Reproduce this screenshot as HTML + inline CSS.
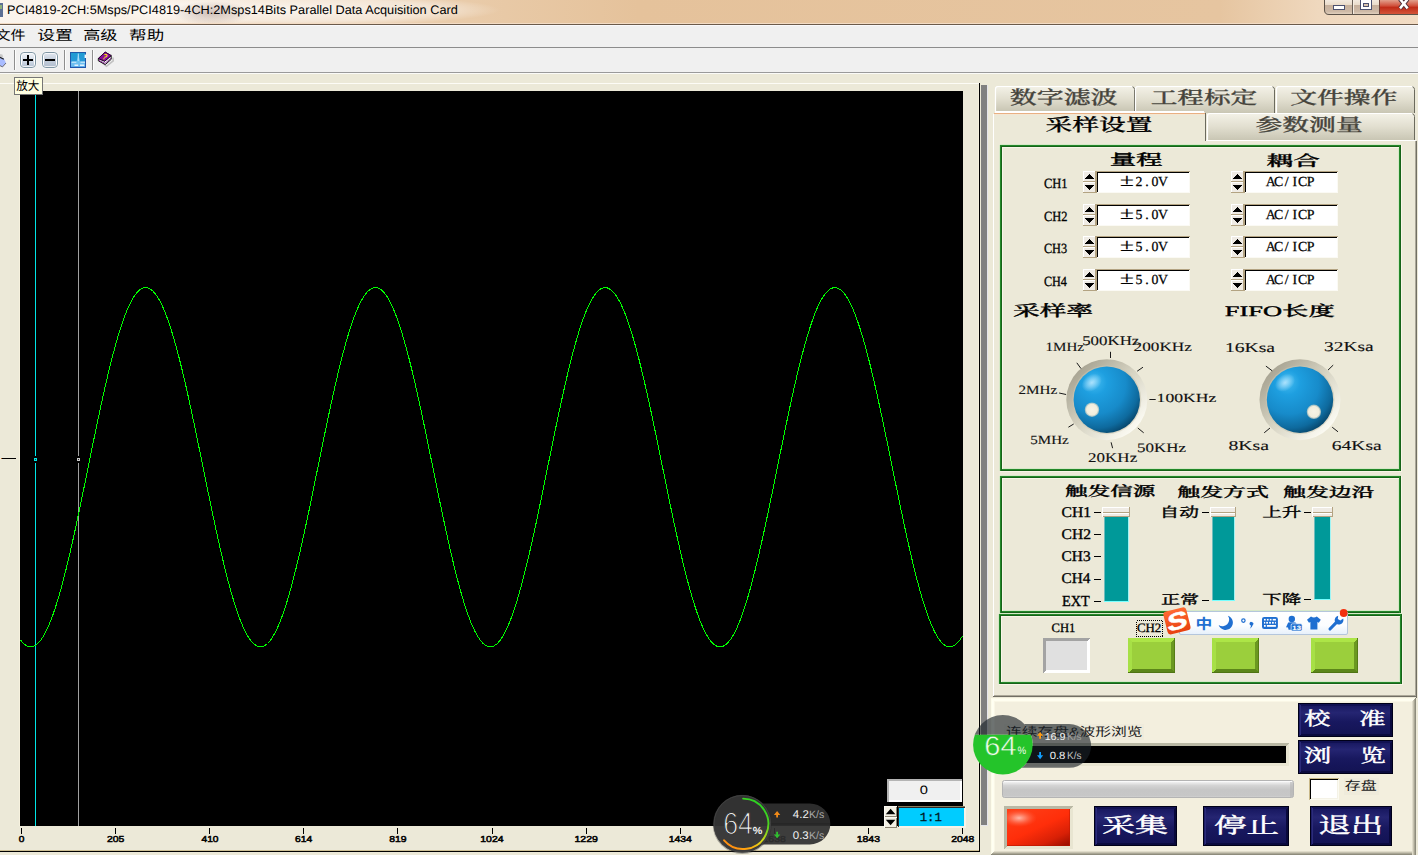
<!DOCTYPE html>
<html lang="zh-CN"><head><meta charset="utf-8"><title>PCI4819 Parallel Data Acquisition Card</title>
<style>
html,body{margin:0;padding:0;background:#ece9d8;overflow:hidden}
body{width:1418px;height:855px;position:relative;font-family:"Liberation Sans","Noto Sans CJK SC",sans-serif}
svg{position:absolute;left:0;top:0;display:block}
svg text{white-space:pre}
.crisp{shape-rendering:crispEdges}
</style></head><body>
<svg width="1418" height="855" viewBox="0 0 1418 855" shape-rendering="crispEdges" text-rendering="geometricPrecision">
<defs>

<linearGradient id="gLeftGlow" x1="0" y1="0" x2="1" y2="0"><stop offset="0" stop-color="#fbf5ee" stop-opacity="0.95"/><stop offset="0.6" stop-color="#fbf5ee" stop-opacity="0.8"/><stop offset="1" stop-color="#fbf5ee" stop-opacity="0"/></linearGradient>
<radialGradient id="gSmudge" cx="0.5" cy="0.5" r="0.5"><stop offset="0" stop-color="#8a6f6a" stop-opacity="0.38"/><stop offset="1" stop-color="#8a6f6a" stop-opacity="0"/></radialGradient>
<linearGradient id="gTitle" x1="0" y1="0" x2="1" y2="0">
 <stop offset="0" stop-color="#f3e3d2"/><stop offset="0.33" stop-color="#e9cba9"/><stop offset="0.45" stop-color="#e5c29b"/><stop offset="0.86" stop-color="#e6c5a0"/><stop offset="0.93" stop-color="#efd8be"/><stop offset="1" stop-color="#f2dcc4"/>
</linearGradient>
<radialGradient id="gGlow" cx="0.5" cy="0.5" r="0.5"><stop offset="0" stop-color="#fff" stop-opacity="0.75"/><stop offset="0.7" stop-color="#fff" stop-opacity="0.45"/><stop offset="1" stop-color="#fff" stop-opacity="0"/></radialGradient>
<linearGradient id="gBtnPlus" x1="0" y1="0" x2="0" y2="1"><stop offset="0" stop-color="#eef2f7"/><stop offset="0.5" stop-color="#d5dde8"/><stop offset="1" stop-color="#b9c6d6"/></linearGradient>
<linearGradient id="gBtnMinus" x1="0" y1="0" x2="0" y2="1"><stop offset="0" stop-color="#dfe5ee"/><stop offset="0.5" stop-color="#c3cddb"/><stop offset="1" stop-color="#b4c0d0"/></linearGradient>
<linearGradient id="gChart" x1="0" y1="0" x2="0" y2="1"><stop offset="0" stop-color="#1f9cd2"/><stop offset="0.6" stop-color="#2698d8"/><stop offset="1" stop-color="#2a84dc"/></linearGradient>
<linearGradient id="gTab" x1="0" y1="0" x2="0" y2="1"><stop offset="0" stop-color="#f4f2e8"/><stop offset="0.5" stop-color="#e2dfd0"/><stop offset="1" stop-color="#c9c6b4"/></linearGradient>
<linearGradient id="gRing" x1="0.15" y1="0.15" x2="0.85" y2="0.85"><stop offset="0" stop-color="#aaa695"/><stop offset="0.5" stop-color="#d8d5c4"/><stop offset="1" stop-color="#fbfaf2"/></linearGradient>
<radialGradient id="gBall" cx="0.36" cy="0.3" r="0.75" fx="0.3" fy="0.22"><stop offset="0" stop-color="#45bdf2"/><stop offset="0.25" stop-color="#1e9fe0"/><stop offset="0.6" stop-color="#178bca"/><stop offset="0.85" stop-color="#0e6a9e"/><stop offset="1" stop-color="#07456a"/></radialGradient>
<radialGradient id="gHi" cx="0.5" cy="0.5" r="0.5"><stop offset="0" stop-color="#bfe9ff" stop-opacity="0.85"/><stop offset="1" stop-color="#bfe9ff" stop-opacity="0"/></radialGradient>
<radialGradient id="gDot" cx="0.5" cy="0.5" r="0.5"><stop offset="0" stop-color="#f7f4e6"/><stop offset="0.75" stop-color="#f1eddc"/><stop offset="1" stop-color="#d9d5c0" stop-opacity="0.6"/></radialGradient>
<linearGradient id="gThumb" x1="0" y1="0" x2="0" y2="1"><stop offset="0" stop-color="#fbfaf6"/><stop offset="0.45" stop-color="#e6e3d8"/><stop offset="0.5" stop-color="#b8b29c"/><stop offset="0.58" stop-color="#f4f2ea"/><stop offset="1" stop-color="#d4d0bf"/></linearGradient>
<linearGradient id="gProg" x1="0" y1="0" x2="0" y2="1"><stop offset="0" stop-color="#fdfdfd"/><stop offset="0.12" stop-color="#ececec"/><stop offset="0.3" stop-color="#d3d3d3"/><stop offset="0.55" stop-color="#c6c6c6"/><stop offset="0.9" stop-color="#c7c7c7"/><stop offset="1" stop-color="#d4d4d4"/></linearGradient>
<linearGradient id="gRed" x1="0.1" y1="0" x2="0.9" y2="1"><stop offset="0" stop-color="#ff4018"/><stop offset="0.5" stop-color="#ff2e0a"/><stop offset="0.8" stop-color="#d82006"/><stop offset="1" stop-color="#a01000"/></linearGradient>
<radialGradient id="gRedHi" cx="0.5" cy="0.5" r="0.5"><stop offset="0" stop-color="#ffc0b2" stop-opacity="0.95"/><stop offset="0.35" stop-color="#ff9a84" stop-opacity="0.7"/><stop offset="1" stop-color="#ff5a3a" stop-opacity="0"/></radialGradient>
<linearGradient id="gNavy" x1="0" y1="0" x2="0" y2="1"><stop offset="0" stop-color="#14145a"/><stop offset="0.28" stop-color="#252572"/><stop offset="0.55" stop-color="#18185f"/><stop offset="1" stop-color="#121252"/></linearGradient>
<linearGradient id="gIme" x1="0" y1="0" x2="0" y2="1"><stop offset="0" stop-color="#ffffff"/><stop offset="0.6" stop-color="#fbfdff"/><stop offset="1" stop-color="#e6f0fb"/></linearGradient>
<linearGradient id="gSogou" x1="0" y1="0" x2="0" y2="1"><stop offset="0" stop-color="#ff6a33"/><stop offset="1" stop-color="#e8400f"/></linearGradient>
<linearGradient id="gArc" x1="0.8" y1="0" x2="0.2" y2="1"><stop offset="0" stop-color="#22d422"/><stop offset="0.3" stop-color="#4fd321"/><stop offset="0.6" stop-color="#d8d818"/><stop offset="0.8" stop-color="#ffb010"/><stop offset="1" stop-color="#ff8c10"/></linearGradient>
<linearGradient id="gClose" x1="0" y1="0" x2="0" y2="1"><stop offset="0" stop-color="#e2a08c"/><stop offset="0.45" stop-color="#cf4a35"/><stop offset="0.5" stop-color="#bf2a16"/><stop offset="1" stop-color="#d4553a"/></linearGradient>
<linearGradient id="gCap" x1="0" y1="0" x2="0" y2="1"><stop offset="0" stop-color="#f4ece3"/><stop offset="0.36" stop-color="#eadccb"/><stop offset="0.4" stop-color="#c6b09c"/><stop offset="0.8" stop-color="#cdb9a6"/><stop offset="1" stop-color="#e4d4c2"/></linearGradient>

</defs>
<rect x="0" y="0" width="1418" height="855" fill="#ece9d8" />
<g id="titlebar">
<rect x="0" y="0" width="1418" height="23" fill="url(#gTitle)" />
<rect x="0" y="0" width="260" height="23" fill="url(#gLeftGlow)"/>
<ellipse cx="300" cy="10" rx="200" ry="16" fill="url(#gGlow)"/>
<ellipse cx="212" cy="13" rx="40" ry="12" fill="url(#gSmudge)"/>
<rect x="0" y="23" width="1418" height="1" fill="#f3dcc5" />
<rect x="0" y="24" width="1418" height="1" fill="#6b5a4a" />
<rect x="0" y="3" width="3" height="14" fill="#5b6f94" />
<rect x="0" y="5" width="2" height="4" fill="#8fb07a" />
<text transform="translate(6.98,13.90) scale(1.026,1)" font-family='"Liberation Sans","Noto Sans CJK SC",sans-serif' font-weight="normal" font-size="12.40" fill="#000" >PCI4819-2CH:5Msps/PCI4819-4CH:2Msps14Bits Parallel Data Acquisition Card</text>
<path d="M1324.5,-1 V10 Q1324.5,14.5 1329,14.5 H1419 V-1 Z" fill="url(#gCap)" stroke="#5c5248" stroke-width="1" shape-rendering="geometricPrecision"/>
<path d="M1379.5,0 H1419 V14 H1379.5 Z" fill="url(#gClose)"/>
<rect x="1352" y="0" width="1" height="14" fill="#6b6158" />
<rect x="1379" y="0" width="1" height="14" fill="#6b4038" />
<rect x="1353" y="0" width="1" height="14" fill="#f6ece0" />
<rect x="1333.5" y="5.5" width="11" height="4" fill="#fff" stroke="#4a5070" stroke-width="1"/>
<rect x="1360.5" y="-0.5" width="11" height="10" fill="#fff" stroke="#4a5070" stroke-width="1"/>
<rect x="1363.5" y="3.5" width="5" height="3" fill="#d9c4ae" stroke="#4a5070" stroke-width="1"/>
<path d="M1400,-1 L1407.6,8.4 M1407.6,-1 L1400,8.4" fill="none" stroke="#50303a" stroke-width="4.4" shape-rendering="geometricPrecision"/>
<path d="M1400,-1 L1407.6,8.4 M1407.6,-1 L1400,8.4" fill="none" stroke="#fff" stroke-width="2.5" shape-rendering="geometricPrecision"/>
</g>
<g id="menubar">
<rect x="0" y="25" width="1418" height="22" fill="#f0f0f0" />
<rect x="0" y="25" width="1418" height="1" fill="#f9f9fb" />
<rect x="0" y="47" width="1418" height="1" fill="#8c8c8c" />
<text transform="translate(-4.45,40.00) scale(1.124,1)" font-family='"Liberation Sans","Noto Sans CJK SC",sans-serif' font-weight="normal" font-size="13.37" fill="#000" >文件</text>
<text transform="translate(37.29,39.96) scale(1.290,1)" font-family='"Liberation Sans","Noto Sans CJK SC",sans-serif' font-weight="normal" font-size="13.80" fill="#000" >设置</text>
<text transform="translate(83.14,39.98) scale(1.272,1)" font-family='"Liberation Sans","Noto Sans CJK SC",sans-serif' font-weight="normal" font-size="13.51" fill="#000" >高级</text>
<text transform="translate(129.12,39.98) scale(1.299,1)" font-family='"Liberation Sans","Noto Sans CJK SC",sans-serif' font-weight="normal" font-size="13.51" fill="#000" >帮助</text>
</g>
<g id="toolbar">
<rect x="0" y="48" width="1418" height="24" fill="#f0f0f0" />
<rect x="0" y="72" width="1418" height="1" fill="#9a9a9a" />
<rect x="0" y="73" width="1418" height="1" fill="#fbfbf8" />
<rect x="14" y="50" width="1" height="20" fill="#8e8e8e" />
<rect x="15" y="50" width="1" height="20" fill="#fdfdfd" />
<rect x="64" y="50" width="1" height="20" fill="#8e8e8e" />
<rect x="65" y="50" width="1" height="20" fill="#fdfdfd" />
<rect x="92" y="50" width="1" height="20" fill="#8e8e8e" />
<rect x="93" y="50" width="1" height="20" fill="#fdfdfd" />
<g shape-rendering="geometricPrecision"><path d="M0,54 L2.4,54.4 L3.3,57.2 L0,57.6 Z" fill="#c9c9c9"/><path d="M0,57.4 L3.6,58 L6,63 L2.5,66.9 L0,65.6 Z" fill="#a9bcff"/><path d="M0,57.3 L3.8,59.3" stroke="#222" stroke-width="1.1" fill="none"/><path d="M6,63 L2.5,66.9 L0,65.6" stroke="#6a6a78" stroke-width="1" fill="none"/></g>
<g shape-rendering="geometricPrecision">
<rect x="19.5" y="51.5" width="17" height="17" rx="4.2" fill="#fbfcfd" opacity="0.8"/>
<rect x="20.5" y="52.5" width="15" height="15" rx="3.4" fill="#ffffff" stroke="#7f95a3" stroke-width="1"/>
<rect x="22" y="53.7" width="12" height="12.6" rx="1.6" fill="url(#gBtnPlus)"/>
<rect x="41.5" y="51.5" width="17" height="17" rx="4.2" fill="#fbfcfd" opacity="0.8"/>
<rect x="42.5" y="52.5" width="15" height="15" rx="3.4" fill="#ffffff" stroke="#7f95a3" stroke-width="1"/>
<rect x="44" y="53.7" width="12" height="12.6" rx="1.6" fill="url(#gBtnMinus)"/>
</g>
<rect x="23" y="59" width="10" height="2" fill="#000" />
<rect x="27" y="55" width="2" height="10" fill="#000" />
<rect x="45" y="59" width="10" height="2" fill="#000" />
<rect x="70" y="52" width="16" height="16" fill="url(#gChart)" />
<g shape-rendering="geometricPrecision">
<rect x="70.5" y="52.5" width="15" height="15" fill="none" stroke="#1f4aa0" stroke-width="1" opacity="0.8"/>
<path d="M71,62.2 H75.6 Q77,61.2 77.6,57.5 L78.3,53.2 L79.1,57.5 Q79.7,61.2 81.2,62.2 H85 V66.8 H71 Z" fill="#9adcff" opacity="0.6"/>
<path d="M71.5,62.2 H76.3 M80.5,62.2 H85" stroke="#e6f5ff" stroke-width="1.3" opacity="0.9"/>
<path d="M74.5,65.2 H78.2 M80,65.2 H84.2" stroke="#f2faff" stroke-width="1.5" opacity="0.9"/>
<path d="M78.3,53.6 V61" stroke="#bfe6ff" stroke-width="1.1" opacity="0.85"/>
<rect x="84.6" y="54.6" width="1.6" height="3.4" fill="#f4f8ff"/>
</g>
<g shape-rendering="geometricPrecision">
<path d="M100,61 L106.5,66.3 L113.2,61 L113,57.5" fill="none" stroke="#9a9a9a" stroke-width="1.6" opacity="0.55"/>
<path d="M98.3,58.5 L105.2,52.1 L111.2,55.6 L104.7,61.2 Z" fill="#8a0c9c" stroke="#1a0020" stroke-width="0.8"/>
<path d="M98.3,58.5 L104.7,61.2 L111.2,55.6 L111.2,59.3 L105.3,64.6 L98.3,60.8 Z" fill="#f4f4f4" stroke="#000" stroke-width="0.9" stroke-linejoin="round"/>
<path d="M98.3,58.5 L105.2,52.1 L111.2,55.6 L104.7,61.2 Z" fill="#8a0c9c" stroke="#1a0020" stroke-width="0.7"/>
<path d="M99,60.4 L105,63.4 L111,58.3" fill="none" stroke="#7a0a8a" stroke-width="0.8"/>
<g transform="rotate(28 105 56.6)"><text transform="translate(102.92,59.60) scale(0.819,1)" font-family='"Liberation Sans","Noto Sans CJK SC",sans-serif' font-weight="bold" font-size="8.45" fill="#ffee00" >?</text></g>
</g>
</g>
<g id="plotpanel">
<rect x="0" y="83" width="979" height="1" fill="#fdfcf6" />
<rect x="0" y="850" width="979" height="1" fill="#cdbf94" />
<rect x="0" y="851" width="980" height="1" fill="#000" />
<rect x="979" y="83" width="1" height="769" fill="#000" />
<rect x="987" y="85" width="1" height="740" fill="#e4e4ea" />
<rect x="981" y="825" width="7" height="1" fill="#e4e4ea" />
<rect x="978" y="85" width="1" height="765" fill="#f4efdc" />
<rect x="981" y="85" width="6" height="740" fill="#808080" />
<rect x="19" y="91" width="1" height="735" fill="#f6f1de" />
<rect x="20" y="91" width="943" height="735" fill="#000" />
<rect x="35" y="91" width="1" height="735" fill="#00e5e5" />
<rect x="78" y="91" width="1" height="735" fill="#a0a0a0" />
<rect x="33" y="456" width="5" height="7" fill="#000" />
<rect x="76" y="456" width="5" height="7" fill="#000" />
<rect x="34" y="458" width="3" height="3" fill="#00e5e5" />
<rect x="35" y="459" width="1" height="1" fill="#004c4c" />
<rect x="77" y="458" width="3" height="3" fill="#c8c8c8" />
<rect x="78" y="459" width="1" height="1" fill="#222" />
<polyline fill="none" stroke="#00ff00" stroke-width="1" points="20.5,639.8 21.5,641.1 22.5,642.3 23.5,643.3 24.5,644.2 25.5,645.0 26.5,645.6 27.5,646.1 28.5,646.5 29.5,646.7 30.5,646.8 31.5,646.8 32.5,646.6 33.5,646.3 34.5,645.8 35.5,645.3 36.5,644.6 37.5,643.7 38.5,642.8 39.5,641.7 40.5,640.4 41.5,639.1 42.5,637.6 43.5,636.0 44.5,634.2 45.5,632.3 46.5,630.3 47.5,628.2 48.5,626.0 49.5,623.6 50.5,621.2 51.5,618.6 52.5,615.9 53.5,613.1 54.5,610.2 55.5,607.1 56.5,604.0 57.5,600.8 58.5,597.4 59.5,594.0 60.5,590.5 61.5,586.9 62.5,583.2 63.5,579.4 64.5,575.5 65.5,571.5 66.5,567.5 67.5,563.4 68.5,559.2 69.5,554.9 70.5,550.6 71.5,546.2 72.5,541.8 73.5,537.3 74.5,532.8 75.5,528.2 76.5,523.5 77.5,518.8 78.5,514.1 79.5,509.4 80.5,504.6 81.5,499.7 82.5,494.9 83.5,490.0 84.5,485.2 85.5,480.3 86.5,475.4 87.5,470.5 88.5,465.5 89.5,460.6 90.5,455.7 91.5,450.8 92.5,445.9 93.5,441.1 94.5,436.2 95.5,431.4 96.5,426.6 97.5,421.8 98.5,417.1 99.5,412.4 100.5,407.7 101.5,403.1 102.5,398.6 103.5,394.1 104.5,389.6 105.5,385.2 106.5,380.9 107.5,376.6 108.5,372.4 109.5,368.2 110.5,364.2 111.5,360.2 112.5,356.3 113.5,352.5 114.5,348.7 115.5,345.1 116.5,341.5 117.5,338.1 118.5,334.7 119.5,331.4 120.5,328.3 121.5,325.2 122.5,322.3 123.5,319.4 124.5,316.7 125.5,314.1 126.5,311.5 127.5,309.2 128.5,306.9 129.5,304.7 130.5,302.7 131.5,300.8 132.5,299.0 133.5,297.3 134.5,295.8 135.5,294.4 136.5,293.1 137.5,292.0 138.5,291.0 139.5,290.1 140.5,289.3 141.5,288.7 142.5,288.2 143.5,287.9 144.5,287.7 145.5,287.6 146.5,287.7 147.5,287.8 148.5,288.2 149.5,288.6 150.5,289.2 151.5,289.9 152.5,290.8 153.5,291.8 154.5,292.9 155.5,294.1 156.5,295.5 157.5,297.0 158.5,298.7 159.5,300.4 160.5,302.3 161.5,304.3 162.5,306.4 163.5,308.7 164.5,311.1 165.5,313.5 166.5,316.1 167.5,318.9 168.5,321.7 169.5,324.6 170.5,327.7 171.5,330.8 172.5,334.0 173.5,337.4 174.5,340.8 175.5,344.4 176.5,348.0 177.5,351.7 178.5,355.5 179.5,359.4 180.5,363.4 181.5,367.4 182.5,371.5 183.5,375.7 184.5,380.0 185.5,384.3 186.5,388.7 187.5,393.2 188.5,397.7 189.5,402.2 190.5,406.8 191.5,411.5 192.5,416.2 193.5,420.9 194.5,425.6 195.5,430.4 196.5,435.3 197.5,440.1 198.5,445.0 199.5,449.9 200.5,454.7 201.5,459.7 202.5,464.6 203.5,469.5 204.5,474.4 205.5,479.3 206.5,484.2 207.5,489.1 208.5,493.9 209.5,498.8 210.5,503.6 211.5,508.4 212.5,513.2 213.5,517.9 214.5,522.6 215.5,527.2 216.5,531.8 217.5,536.4 218.5,540.9 219.5,545.4 220.5,549.7 221.5,554.1 222.5,558.3 223.5,562.5 224.5,566.7 225.5,570.7 226.5,574.7 227.5,578.6 228.5,582.4 229.5,586.1 230.5,589.8 231.5,593.3 232.5,596.8 233.5,600.1 234.5,603.4 235.5,606.5 236.5,609.6 237.5,612.5 238.5,615.3 239.5,618.1 240.5,620.7 241.5,623.2 242.5,625.5 243.5,627.8 244.5,629.9 245.5,631.9 246.5,633.8 247.5,635.6 248.5,637.3 249.5,638.8 250.5,640.2 251.5,641.4 252.5,642.5 253.5,643.5 254.5,644.4 255.5,645.1 256.5,645.7 257.5,646.2 258.5,646.5 259.5,646.7 260.5,646.8 261.5,646.7 262.5,646.5 263.5,646.2 264.5,645.7 265.5,645.1 266.5,644.4 267.5,643.5 268.5,642.5 269.5,641.4 270.5,640.1 271.5,638.7 272.5,637.2 273.5,635.5 274.5,633.8 275.5,631.9 276.5,629.8 277.5,627.7 278.5,625.4 279.5,623.0 280.5,620.5 281.5,617.9 282.5,615.2 283.5,612.4 284.5,609.4 285.5,606.4 286.5,603.2 287.5,599.9 288.5,596.6 289.5,593.1 290.5,589.6 291.5,585.9 292.5,582.2 293.5,578.4 294.5,574.5 295.5,570.5 296.5,566.5 297.5,562.3 298.5,558.1 299.5,553.9 300.5,549.5 301.5,545.1 302.5,540.7 303.5,536.2 304.5,531.6 305.5,527.0 306.5,522.3 307.5,517.7 308.5,512.9 309.5,508.2 310.5,503.4 311.5,498.5 312.5,493.7 313.5,488.8 314.5,483.9 315.5,479.0 316.5,474.1 317.5,469.2 318.5,464.3 319.5,459.4 320.5,454.5 321.5,449.6 322.5,444.7 323.5,439.9 324.5,435.0 325.5,430.2 326.5,425.4 327.5,420.6 328.5,415.9 329.5,411.2 330.5,406.6 331.5,402.0 332.5,397.4 333.5,392.9 334.5,388.5 335.5,384.1 336.5,379.8 337.5,375.5 338.5,371.3 339.5,367.2 340.5,363.2 341.5,359.2 342.5,355.3 343.5,351.5 344.5,347.8 345.5,344.2 346.5,340.7 347.5,337.2 348.5,333.9 349.5,330.6 350.5,327.5 351.5,324.5 352.5,321.5 353.5,318.7 354.5,316.0 355.5,313.4 356.5,310.9 357.5,308.6 358.5,306.3 359.5,304.2 360.5,302.2 361.5,300.3 362.5,298.6 363.5,296.9 364.5,295.4 365.5,294.1 366.5,292.8 367.5,291.7 368.5,290.7 369.5,289.9 370.5,289.2 371.5,288.6 372.5,288.1 373.5,287.8 374.5,287.6 375.5,287.6 376.5,287.7 377.5,287.9 378.5,288.3 379.5,288.8 380.5,289.4 381.5,290.1 382.5,291.0 383.5,292.0 384.5,293.2 385.5,294.5 386.5,295.9 387.5,297.4 388.5,299.1 389.5,300.9 390.5,302.8 391.5,304.8 392.5,307.0 393.5,309.3 394.5,311.7 395.5,314.2 396.5,316.8 397.5,319.6 398.5,322.4 399.5,325.4 400.5,328.4 401.5,331.6 402.5,334.9 403.5,338.2 404.5,341.7 405.5,345.3 406.5,348.9 407.5,352.7 408.5,356.5 409.5,360.4 410.5,364.4 411.5,368.4 412.5,372.6 413.5,376.8 414.5,381.1 415.5,385.4 416.5,389.8 417.5,394.3 418.5,398.8 419.5,403.4 420.5,408.0 421.5,412.6 422.5,417.3 423.5,422.1 424.5,426.8 425.5,431.6 426.5,436.5 427.5,441.3 428.5,446.2 429.5,451.1 430.5,456.0 431.5,460.9 432.5,465.8 433.5,470.7 434.5,475.6 435.5,480.5 436.5,485.4 437.5,490.3 438.5,495.1 439.5,500.0 440.5,504.8 441.5,509.6 442.5,514.3 443.5,519.1 444.5,523.7 445.5,528.4 446.5,533.0 447.5,537.5 448.5,542.0 449.5,546.5 450.5,550.8 451.5,555.2 452.5,559.4 453.5,563.6 454.5,567.7 455.5,571.7 456.5,575.7 457.5,579.5 458.5,583.3 459.5,587.0 460.5,590.7 461.5,594.2 462.5,597.6 463.5,600.9 464.5,604.2 465.5,607.3 466.5,610.3 467.5,613.2 468.5,616.0 469.5,618.7 470.5,621.3 471.5,623.8 472.5,626.1 473.5,628.3 474.5,630.4 475.5,632.4 476.5,634.3 477.5,636.0 478.5,637.6 479.5,639.1 480.5,640.5 481.5,641.7 482.5,642.8 483.5,643.8 484.5,644.6 485.5,645.3 486.5,645.9 487.5,646.3 488.5,646.6 489.5,646.8 490.5,646.8 491.5,646.7 492.5,646.5 493.5,646.1 494.5,645.6 495.5,644.9 496.5,644.2 497.5,643.3 498.5,642.2 499.5,641.1 500.5,639.8 501.5,638.3 502.5,636.8 503.5,635.1 504.5,633.3 505.5,631.4 506.5,629.3 507.5,627.1 508.5,624.8 509.5,622.4 510.5,619.9 511.5,617.2 512.5,614.5 513.5,611.6 514.5,608.7 515.5,605.6 516.5,602.4 517.5,599.1 518.5,595.7 519.5,592.2 520.5,588.7 521.5,585.0 522.5,581.3 523.5,577.4 524.5,573.5 525.5,569.5 526.5,565.4 527.5,561.3 528.5,557.1 529.5,552.8 530.5,548.4 531.5,544.0 532.5,539.6 533.5,535.0 534.5,530.5 535.5,525.8 536.5,521.2 537.5,516.5 538.5,511.7 539.5,507.0 540.5,502.2 541.5,497.3 542.5,492.5 543.5,487.6 544.5,482.7 545.5,477.8 546.5,472.9 547.5,468.0 548.5,463.1 549.5,458.2 550.5,453.3 551.5,448.4 552.5,443.5 553.5,438.6 554.5,433.8 555.5,429.0 556.5,424.2 557.5,419.5 558.5,414.7 559.5,410.1 560.5,405.4 561.5,400.8 562.5,396.3 563.5,391.8 564.5,387.4 565.5,383.0 566.5,378.7 567.5,374.5 568.5,370.3 569.5,366.2 570.5,362.2 571.5,358.2 572.5,354.4 573.5,350.6 574.5,346.9 575.5,343.3 576.5,339.8 577.5,336.4 578.5,333.1 579.5,329.8 580.5,326.7 581.5,323.7 582.5,320.8 583.5,318.0 584.5,315.4 585.5,312.8 586.5,310.3 587.5,308.0 588.5,305.8 589.5,303.7 590.5,301.7 591.5,299.9 592.5,298.2 593.5,296.6 594.5,295.1 595.5,293.8 596.5,292.5 597.5,291.5 598.5,290.5 599.5,289.7 600.5,289.0 601.5,288.5 602.5,288.1 603.5,287.8 604.5,287.6 605.5,287.6 606.5,287.7 607.5,288.0 608.5,288.4 609.5,288.9 610.5,289.6 611.5,290.3 612.5,291.3 613.5,292.3 614.5,293.5 615.5,294.8 616.5,296.3 617.5,297.8 618.5,299.5 619.5,301.3 620.5,303.3 621.5,305.4 622.5,307.6 623.5,309.9 624.5,312.3 625.5,314.8 626.5,317.5 627.5,320.3 628.5,323.1 629.5,326.1 630.5,329.2 631.5,332.4 632.5,335.7 633.5,339.1 634.5,342.6 635.5,346.2 636.5,349.8 637.5,353.6 638.5,357.5 639.5,361.4 640.5,365.4 641.5,369.5 642.5,373.6 643.5,377.9 644.5,382.2 645.5,386.5 646.5,390.9 647.5,395.4 648.5,399.9 649.5,404.5 650.5,409.1 651.5,413.8 652.5,418.5 653.5,423.3 654.5,428.0 655.5,432.8 656.5,437.7 657.5,442.5 658.5,447.4 659.5,452.3 660.5,457.2 661.5,462.1 662.5,467.0 663.5,471.9 664.5,476.8 665.5,481.7 666.5,486.6 667.5,491.5 668.5,496.4 669.5,501.2 670.5,506.0 671.5,510.8 672.5,515.5 673.5,520.2 674.5,524.9 675.5,529.5 676.5,534.1 677.5,538.7 678.5,543.1 679.5,547.6 680.5,551.9 681.5,556.2 682.5,560.5 683.5,564.6 684.5,568.7 685.5,572.7 686.5,576.7 687.5,580.5 688.5,584.3 689.5,588.0 690.5,591.5 691.5,595.0 692.5,598.4 693.5,601.7 694.5,604.9 695.5,608.0 696.5,611.0 697.5,613.9 698.5,616.7 699.5,619.4 700.5,621.9 701.5,624.4 702.5,626.7 703.5,628.9 704.5,631.0 705.5,632.9 706.5,634.7 707.5,636.4 708.5,638.0 709.5,639.5 710.5,640.8 711.5,642.0 712.5,643.1 713.5,644.0 714.5,644.8 715.5,645.5 716.5,646.0 717.5,646.4 718.5,646.7 719.5,646.8 720.5,646.8 721.5,646.6 722.5,646.4 723.5,646.0 724.5,645.4 725.5,644.8 726.5,643.9 727.5,643.0 728.5,641.9 729.5,640.7 730.5,639.4 731.5,638.0 732.5,636.4 733.5,634.7 734.5,632.8 735.5,630.9 736.5,628.8 737.5,626.6 738.5,624.2 739.5,621.8 740.5,619.2 741.5,616.6 742.5,613.8 743.5,610.9 744.5,607.9 745.5,604.8 746.5,601.6 747.5,598.3 748.5,594.9 749.5,591.4 750.5,587.8 751.5,584.1 752.5,580.3 753.5,576.5 754.5,572.5 755.5,568.5 756.5,564.4 757.5,560.2 758.5,556.0 759.5,551.7 760.5,547.3 761.5,542.9 762.5,538.4 763.5,533.9 764.5,529.3 765.5,524.7 766.5,520.0 767.5,515.3 768.5,510.5 769.5,505.8 770.5,501.0 771.5,496.1 772.5,491.3 773.5,486.4 774.5,481.5 775.5,476.6 776.5,471.7 777.5,466.8 778.5,461.9 779.5,457.0 780.5,452.1 781.5,447.2 782.5,442.3 783.5,437.4 784.5,432.6 785.5,427.8 786.5,423.0 787.5,418.3 788.5,413.6 789.5,408.9 790.5,404.3 791.5,399.7 792.5,395.2 793.5,390.7 794.5,386.3 795.5,381.9 796.5,377.6 797.5,373.4 798.5,369.3 799.5,365.2 800.5,361.2 801.5,357.3 802.5,353.4 803.5,349.7 804.5,346.0 805.5,342.4 806.5,338.9 807.5,335.5 808.5,332.2 809.5,329.1 810.5,326.0 811.5,323.0 812.5,320.1 813.5,317.4 814.5,314.7 815.5,312.2 816.5,309.7 817.5,307.4 818.5,305.3 819.5,303.2 820.5,301.3 821.5,299.4 822.5,297.7 823.5,296.2 824.5,294.7 825.5,293.4 826.5,292.3 827.5,291.2 828.5,290.3 829.5,289.5 830.5,288.9 831.5,288.4 832.5,288.0 833.5,287.7 834.5,287.6 835.5,287.6 836.5,287.8 837.5,288.1 838.5,288.5 839.5,289.1 840.5,289.7 841.5,290.6 842.5,291.5 843.5,292.6 844.5,293.8 845.5,295.2 846.5,296.6 847.5,298.2 848.5,300.0 849.5,301.8 850.5,303.8 851.5,305.9 852.5,308.1 853.5,310.5 854.5,312.9 855.5,315.5 856.5,318.2 857.5,321.0 858.5,323.9 859.5,326.9 860.5,330.0 861.5,333.2 862.5,336.5 863.5,340.0 864.5,343.5 865.5,347.1 866.5,350.8 867.5,354.6 868.5,358.4 869.5,362.4 870.5,366.4 871.5,370.5 872.5,374.7 873.5,378.9 874.5,383.2 875.5,387.6 876.5,392.0 877.5,396.5 878.5,401.1 879.5,405.7 880.5,410.3 881.5,415.0 882.5,419.7 883.5,424.5 884.5,429.2 885.5,434.1 886.5,438.9 887.5,443.8 888.5,448.6 889.5,453.5 890.5,458.4 891.5,463.3 892.5,468.2 893.5,473.2 894.5,478.1 895.5,483.0 896.5,487.8 897.5,492.7 898.5,497.6 899.5,502.4 900.5,507.2 901.5,512.0 902.5,516.7 903.5,521.4 904.5,526.1 905.5,530.7 906.5,535.3 907.5,539.8 908.5,544.2 909.5,548.7 910.5,553.0 911.5,557.3 912.5,561.5 913.5,565.6 914.5,569.7 915.5,573.7 916.5,577.6 917.5,581.5 918.5,585.2 919.5,588.9 920.5,592.4 921.5,595.9 922.5,599.3 923.5,602.6 924.5,605.7 925.5,608.8 926.5,611.8 927.5,614.6 928.5,617.4 929.5,620.0 930.5,622.5 931.5,625.0 932.5,627.2 933.5,629.4 934.5,631.5 935.5,633.4 936.5,635.2 937.5,636.9 938.5,638.4 939.5,639.8 940.5,641.1 941.5,642.3 942.5,643.3 943.5,644.2 944.5,645.0 945.5,645.6 946.5,646.1 947.5,646.5 948.5,646.7 949.5,646.8 950.5,646.8 951.5,646.6 952.5,646.3 953.5,645.8 954.5,645.3 955.5,644.6 956.5,643.7 957.5,642.8 958.5,641.7 959.5,640.4 960.5,639.1 961.5,637.6 962.5,636.0"/>
<rect x="1" y="458" width="15" height="1" fill="#000" />
<rect x="1" y="458" width="1" height="1" fill="#b06020" />
<rect x="21" y="828" width="1" height="6" fill="#000" />
<text transform="translate(18.72,842.11) scale(1.157,1)" font-family='"Liberation Sans","Noto Sans CJK SC",sans-serif' font-weight="normal" font-size="8.73" fill="#000"  stroke="#000" stroke-width="0.5">0</text>
<rect x="115" y="828" width="1" height="6" fill="#000" />
<text transform="translate(106.97,842.11) scale(1.191,1)" font-family='"Liberation Sans","Noto Sans CJK SC",sans-serif' font-weight="normal" font-size="8.73" fill="#000"  stroke="#000" stroke-width="0.5">205</text>
<rect x="209" y="828" width="1" height="6" fill="#000" />
<text transform="translate(201.51,842.11) scale(1.168,1)" font-family='"Liberation Sans","Noto Sans CJK SC",sans-serif' font-weight="normal" font-size="8.73" fill="#000"  stroke="#000" stroke-width="0.5">410</text>
<rect x="303" y="828" width="1" height="6" fill="#000" />
<text transform="translate(294.95,842.11) scale(1.183,1)" font-family='"Liberation Sans","Noto Sans CJK SC",sans-serif' font-weight="normal" font-size="8.73" fill="#000"  stroke="#000" stroke-width="0.5">614</text>
<rect x="397" y="828" width="1" height="6" fill="#000" />
<text transform="translate(389.27,842.11) scale(1.191,1)" font-family='"Liberation Sans","Noto Sans CJK SC",sans-serif' font-weight="normal" font-size="8.73" fill="#000"  stroke="#000" stroke-width="0.5">819</text>
<rect x="492" y="828" width="1" height="6" fill="#000" />
<text transform="translate(480.30,842.11) scale(1.194,1)" font-family='"Liberation Sans","Noto Sans CJK SC",sans-serif' font-weight="normal" font-size="8.73" fill="#000"  stroke="#000" stroke-width="0.5">1024</text>
<rect x="586" y="828" width="1" height="6" fill="#000" />
<text transform="translate(574.51,842.11) scale(1.206,1)" font-family='"Liberation Sans","Noto Sans CJK SC",sans-serif' font-weight="normal" font-size="8.73" fill="#000"  stroke="#000" stroke-width="0.5">1229</text>
<rect x="680" y="828" width="1" height="6" fill="#000" />
<text transform="translate(668.74,842.11) scale(1.194,1)" font-family='"Liberation Sans","Noto Sans CJK SC",sans-serif' font-weight="normal" font-size="8.73" fill="#000"  stroke="#000" stroke-width="0.5">1434</text>
<rect x="774" y="828" width="1" height="6" fill="#000" />
<text transform="translate(762.49,842.11) scale(1.200,1)" font-family='"Liberation Sans","Noto Sans CJK SC",sans-serif' font-weight="normal" font-size="8.73" fill="#000"  stroke="#000" stroke-width="0.5">1638</text>
<rect x="868" y="828" width="1" height="6" fill="#000" />
<text transform="translate(856.71,842.11) scale(1.200,1)" font-family='"Liberation Sans","Noto Sans CJK SC",sans-serif' font-weight="normal" font-size="8.73" fill="#000"  stroke="#000" stroke-width="0.5">1843</text>
<rect x="962" y="828" width="1" height="6" fill="#000" />
<text transform="translate(951.14,842.11) scale(1.189,1)" font-family='"Liberation Sans","Noto Sans CJK SC",sans-serif' font-weight="normal" font-size="8.73" fill="#000"  stroke="#000" stroke-width="0.5">2048</text>
<rect x="887" y="779" width="75" height="23" fill="#f0f0f0" />
<rect x="887" y="779" width="75" height="2" fill="#b4b4b4" />
<rect x="887" y="779" width="2" height="23" fill="#b4b4b4" />
<rect x="889" y="800" width="73" height="2" fill="#ffffff" />
<rect x="960" y="781" width="2" height="21" fill="#ffffff" />
<text transform="translate(919.86,793.88) scale(1.213,1)" font-family='"Liberation Sans","Noto Sans CJK SC",sans-serif' font-weight="normal" font-size="12.11" fill="#000" >0</text>
<rect x="898" y="806" width="68" height="22" fill="#f6f3e8" />
<rect x="898" y="806" width="67" height="1" fill="#8c7c5c" />
<rect x="898" y="807" width="67" height="1" fill="#2a2a2a" />
<rect x="898" y="807" width="1" height="20" fill="#2a2a2a" />
<rect x="899" y="808" width="65" height="18" fill="#00ccff" />
<text transform="translate(919.63,821.00) scale(0.995,1)" font-family='"Liberation Mono","Noto Sans CJK SC",monospace' font-weight="normal" font-size="12.42" fill="#00181f" stroke="#00181f" stroke-width="0.3">1:1</text>
<rect x="884" y="806" width="13" height="11" fill="#f3f0e4" />
<polygon points="884,806 897,806 896,807 885,807 885,816 884,817" fill="#fbfaf4"/>
<polygon points="897,806 897,817 884,817 885,816 896,816 896,807" fill="#8a8270"/>
<rect x="884" y="817" width="13" height="11" fill="#f3f0e4" />
<polygon points="884,817 897,817 896,818 885,818 885,827 884,828" fill="#fbfaf4"/>
<polygon points="897,817 897,828 884,828 885,827 896,827 896,818" fill="#8a8270"/>
<g shape-rendering="geometricPrecision"><path d="M885.8,814.2 L890.6,808.8 L895.4,814.2 Z M885.8,819.8 L890.6,825.2 L895.4,819.8 Z" fill="#000"/></g>
<rect x="14.5" y="77.5" width="28" height="17" fill="#ffffe1" stroke="#767676" stroke-width="1"/>
<text transform="translate(16.27,90.40) scale(0.948,1)" font-family='"Liberation Sans","Noto Sans CJK SC",sans-serif' font-weight="normal" font-size="12.23" fill="#000" >放大</text>
</g>
<g id="tabs">
<path d="M995,111 V89 Q995,86 998,86 H1132 Q1135,86 1135,89 V111 Z" fill="url(#gTab)"/>
<path d="M995.5,111 V89 Q995.5,86.5 998,86.5 H1132" fill="none" stroke="#ffffff" stroke-width="1.2" shape-rendering="geometricPrecision"/>
<path d="M1132.5,86.8 Q1134.5,87 1134.5,89.5 V111" fill="none" stroke="#6b6a5e" stroke-width="1" shape-rendering="geometricPrecision"/>
<path d="M1135,113 V89 Q1135,86 1138,86 H1272 Q1275,86 1275,89 V113 Z" fill="url(#gTab)"/>
<path d="M1135.5,113 V89 Q1135.5,86.5 1138,86.5 H1272" fill="none" stroke="#ffffff" stroke-width="1.2" shape-rendering="geometricPrecision"/>
<path d="M1272.5,86.8 Q1274.5,87 1274.5,89.5 V113" fill="none" stroke="#6b6a5e" stroke-width="1" shape-rendering="geometricPrecision"/>
<path d="M1276,113 V89 Q1276,86 1279,86 H1412 Q1415,86 1415,89 V113 Z" fill="url(#gTab)"/>
<path d="M1276.5,113 V89 Q1276.5,86.5 1279,86.5 H1412" fill="none" stroke="#ffffff" stroke-width="1.2" shape-rendering="geometricPrecision"/>
<path d="M1412.5,86.8 Q1414.5,87 1414.5,89.5 V113" fill="none" stroke="#6b6a5e" stroke-width="1" shape-rendering="geometricPrecision"/>
<path d="M1207,140 V116 Q1207,113 1210,113 H1412 Q1415,113 1415,116 V140 Z" fill="url(#gTab)"/>
<path d="M1207.5,140 V116 Q1207.5,113.5 1210,113.5 H1412" fill="none" stroke="#ffffff" stroke-width="1.2" shape-rendering="geometricPrecision"/>
<path d="M1412.5,113.8 Q1414.5,114 1414.5,116.5 V140" fill="none" stroke="#6b6a5e" stroke-width="1" shape-rendering="geometricPrecision"/>
<rect x="993" y="141" width="424" height="556" fill="#ece9d8" />
<rect x="1206" y="140" width="210" height="1" fill="#ffffff" />
<rect x="993" y="113" width="1" height="584" fill="#ffffff" />
<rect x="1415" y="141" width="1" height="556" fill="#aca899" />
<rect x="1416" y="141" width="1" height="557" fill="#716f64" />
<rect x="993" y="696" width="424" height="1" fill="#716f64" />
<rect x="994" y="695" width="422" height="1" fill="#aca899" />
<path d="M993,141 V114 Q993,111 996,111 H1202 Q1205,111 1205,114 V141 Z" fill="#ece9d8"/>
<rect x="995" y="111" width="209" height="2" fill="#ffffff" />
<rect x="994" y="113" width="211" height="1" fill="#e9b083" />
<rect x="994" y="114" width="211" height="1" fill="#f4e6d2" />
<rect x="993" y="114" width="1" height="28" fill="#ffffff" />
<rect x="1205" y="113" width="1" height="28" fill="#6b6a5e" />
<text transform="translate(1009.79,104.12) scale(1.447,1)" font-family='"Liberation Serif","Noto Serif CJK SC",serif' font-weight="500" font-size="18.62" fill="#46443c"  stroke="#46443c" stroke-width="0.3" vector-effect="non-scaling-stroke" stroke-linejoin="round">数字滤波</text>
<text transform="translate(1150.70,104.37) scale(1.471,1)" font-family='"Liberation Serif","Noto Serif CJK SC",serif' font-weight="500" font-size="18.09" fill="#46443c"  stroke="#46443c" stroke-width="0.3" vector-effect="non-scaling-stroke" stroke-linejoin="round">工程标定</text>
<text transform="translate(1290.20,104.19) scale(1.500,1)" font-family='"Liberation Serif","Noto Serif CJK SC",serif' font-weight="500" font-size="17.87" fill="#46443c"  stroke="#46443c" stroke-width="0.3" vector-effect="non-scaling-stroke" stroke-linejoin="round">文件操作</text>
<text transform="translate(1045.50,130.60) scale(1.507,1)" font-family='"Liberation Serif","Noto Serif CJK SC",serif' font-weight="500" font-size="17.77" fill="#000"  stroke="#000" stroke-width="0.3" vector-effect="non-scaling-stroke" stroke-linejoin="round">采样设置</text>
<text transform="translate(1255.39,131.40) scale(1.511,1)" font-family='"Liberation Serif","Noto Serif CJK SC",serif' font-weight="500" font-size="17.77" fill="#46443c"  stroke="#46443c" stroke-width="0.3" vector-effect="non-scaling-stroke" stroke-linejoin="round">参数测量</text>
</g>
<g id="box-sampling">
<rect x="999" y="145" width="1" height="326" fill="#d6e8c8" />
<rect x="1000" y="144" width="401" height="1" fill="#d6e8c8" />
<rect x="1398" y="147" width="1" height="322" fill="#d6e8c8" />
<rect x="1002" y="468" width="397" height="1" fill="#d6e8c8" />
<rect x="1002" y="147" width="1" height="322" fill="#f9f5e8" />
<rect x="1002" y="147" width="397" height="1" fill="#f9f5e8" />
<rect x="1401" y="145" width="1" height="326" fill="#f9f5e8" />
<rect x="1000" y="471" width="402" height="1" fill="#f9f5e8" />
<rect x="1000" y="145" width="401" height="1" fill="#24882a" />
<rect x="1000" y="146" width="401" height="1" fill="#166318" />
<rect x="1000" y="469" width="401" height="1" fill="#24882a" />
<rect x="1000" y="470" width="401" height="1" fill="#166318" />
<rect x="1000" y="145" width="1" height="326" fill="#24882a" />
<rect x="1001" y="146" width="1" height="324" fill="#166318" />
<rect x="1399" y="145" width="1" height="326" fill="#24882a" />
<rect x="1400" y="145" width="1" height="326" fill="#166318" />
<text transform="translate(1109.64,164.93) scale(1.738,1)" font-family='"Liberation Serif","Noto Serif CJK SC",serif' font-weight="500" font-size="15.21" fill="#000"  stroke="#000" stroke-width="0.35" vector-effect="non-scaling-stroke" stroke-linejoin="round">量程</text>
<text transform="translate(1266.47,165.67) scale(1.810,1)" font-family='"Liberation Serif","Noto Serif CJK SC",serif' font-weight="500" font-size="14.74" fill="#000"  stroke="#000" stroke-width="0.35" vector-effect="non-scaling-stroke" stroke-linejoin="round">耦合</text>
<text transform="translate(1043.90,187.52) scale(0.896,1)" font-family='"Liberation Serif","Noto Serif CJK SC",serif' font-weight="normal" font-size="13.97" fill="#000"  stroke="#000" stroke-width="0.3">CH1</text>
<rect x="1083" y="171" width="13" height="11" fill="#efebe4" />
<rect x="1083" y="171" width="13" height="1" fill="#ffffff" />
<rect x="1083" y="171" width="1" height="11" fill="#ffffff" />
<rect x="1083" y="181" width="13" height="1" fill="#b3a382" />
<rect x="1095" y="171" width="1" height="11" fill="#b3a382" />
<rect x="1083" y="182" width="13" height="11" fill="#efebe4" />
<rect x="1083" y="182" width="13" height="1" fill="#ffffff" />
<rect x="1083" y="182" width="1" height="11" fill="#ffffff" />
<rect x="1083" y="192" width="13" height="1" fill="#b3a382" />
<rect x="1095" y="182" width="1" height="11" fill="#b3a382" />
<rect x="1089" y="174" width="1" height="1" fill="#000" />
<rect x="1085" y="185" width="9" height="1" fill="#000" />
<rect x="1088" y="175" width="3" height="1" fill="#000" />
<rect x="1086" y="186" width="7" height="1" fill="#000" />
<rect x="1087" y="176" width="5" height="1" fill="#000" />
<rect x="1087" y="187" width="5" height="1" fill="#000" />
<rect x="1086" y="177" width="7" height="1" fill="#000" />
<rect x="1088" y="188" width="3" height="1" fill="#000" />
<rect x="1085" y="178" width="9" height="1" fill="#000" />
<rect x="1089" y="189" width="1" height="1" fill="#000" />
<rect x="1096" y="171" width="94" height="22" fill="#fff" />
<rect x="1096" y="171" width="94" height="1" fill="#b3a382" />
<rect x="1096" y="171" width="1" height="22" fill="#b3a382" />
<rect x="1097" y="172" width="93" height="1" fill="#000" />
<rect x="1097" y="172" width="1" height="20" fill="#000" />
<rect x="1097" y="192" width="93" height="1" fill="#fbfaf4" />
<rect x="1189" y="172" width="1" height="21" fill="#fbfaf4" />
<text transform="translate(1120.00,186.20) scale(1.403,1)" font-family='"Liberation Serif","Noto Serif CJK SC",serif' font-weight="normal" font-size="17.89" fill="#000"  stroke="#000" stroke-width="0.2">±</text>
<text x="1139.0 1147.0 1155.0 1163.0" y="186" text-anchor="middle" font-family='"Liberation Serif","Noto Serif CJK SC",serif' font-size="13.8" font-weight="normal" fill="#000" stroke="#000" stroke-width="0.25">2.0V</text>
<rect x="1231" y="171" width="13" height="11" fill="#efebe4" />
<rect x="1231" y="171" width="13" height="1" fill="#ffffff" />
<rect x="1231" y="171" width="1" height="11" fill="#ffffff" />
<rect x="1231" y="181" width="13" height="1" fill="#b3a382" />
<rect x="1243" y="171" width="1" height="11" fill="#b3a382" />
<rect x="1231" y="182" width="13" height="11" fill="#efebe4" />
<rect x="1231" y="182" width="13" height="1" fill="#ffffff" />
<rect x="1231" y="182" width="1" height="11" fill="#ffffff" />
<rect x="1231" y="192" width="13" height="1" fill="#b3a382" />
<rect x="1243" y="182" width="1" height="11" fill="#b3a382" />
<rect x="1237" y="174" width="1" height="1" fill="#000" />
<rect x="1233" y="185" width="9" height="1" fill="#000" />
<rect x="1236" y="175" width="3" height="1" fill="#000" />
<rect x="1234" y="186" width="7" height="1" fill="#000" />
<rect x="1235" y="176" width="5" height="1" fill="#000" />
<rect x="1235" y="187" width="5" height="1" fill="#000" />
<rect x="1234" y="177" width="7" height="1" fill="#000" />
<rect x="1236" y="188" width="3" height="1" fill="#000" />
<rect x="1233" y="178" width="9" height="1" fill="#000" />
<rect x="1237" y="189" width="1" height="1" fill="#000" />
<rect x="1244" y="171" width="94" height="22" fill="#fff" />
<rect x="1244" y="171" width="94" height="1" fill="#b3a382" />
<rect x="1244" y="171" width="1" height="22" fill="#b3a382" />
<rect x="1245" y="172" width="93" height="1" fill="#000" />
<rect x="1245" y="172" width="1" height="20" fill="#000" />
<rect x="1245" y="192" width="93" height="1" fill="#fbfaf4" />
<rect x="1337" y="172" width="1" height="21" fill="#fbfaf4" />
<text x="1270.7 1278.7 1286.7 1294.7 1302.7 1310.7" y="186" text-anchor="middle" font-family='"Liberation Serif","Noto Serif CJK SC",serif' font-size="13.8" font-weight="normal" fill="#000" stroke="#000" stroke-width="0.25">AC/ICP</text>
<text transform="translate(1043.90,220.52) scale(0.891,1)" font-family='"Liberation Serif","Noto Serif CJK SC",serif' font-weight="normal" font-size="13.97" fill="#000"  stroke="#000" stroke-width="0.3">CH2</text>
<rect x="1083" y="204" width="13" height="11" fill="#efebe4" />
<rect x="1083" y="204" width="13" height="1" fill="#ffffff" />
<rect x="1083" y="204" width="1" height="11" fill="#ffffff" />
<rect x="1083" y="214" width="13" height="1" fill="#b3a382" />
<rect x="1095" y="204" width="1" height="11" fill="#b3a382" />
<rect x="1083" y="215" width="13" height="11" fill="#efebe4" />
<rect x="1083" y="215" width="13" height="1" fill="#ffffff" />
<rect x="1083" y="215" width="1" height="11" fill="#ffffff" />
<rect x="1083" y="225" width="13" height="1" fill="#b3a382" />
<rect x="1095" y="215" width="1" height="11" fill="#b3a382" />
<rect x="1089" y="207" width="1" height="1" fill="#000" />
<rect x="1085" y="218" width="9" height="1" fill="#000" />
<rect x="1088" y="208" width="3" height="1" fill="#000" />
<rect x="1086" y="219" width="7" height="1" fill="#000" />
<rect x="1087" y="209" width="5" height="1" fill="#000" />
<rect x="1087" y="220" width="5" height="1" fill="#000" />
<rect x="1086" y="210" width="7" height="1" fill="#000" />
<rect x="1088" y="221" width="3" height="1" fill="#000" />
<rect x="1085" y="211" width="9" height="1" fill="#000" />
<rect x="1089" y="222" width="1" height="1" fill="#000" />
<rect x="1096" y="204" width="94" height="22" fill="#fff" />
<rect x="1096" y="204" width="94" height="1" fill="#b3a382" />
<rect x="1096" y="204" width="1" height="22" fill="#b3a382" />
<rect x="1097" y="205" width="93" height="1" fill="#000" />
<rect x="1097" y="205" width="1" height="20" fill="#000" />
<rect x="1097" y="225" width="93" height="1" fill="#fbfaf4" />
<rect x="1189" y="205" width="1" height="21" fill="#fbfaf4" />
<text transform="translate(1120.00,219.20) scale(1.403,1)" font-family='"Liberation Serif","Noto Serif CJK SC",serif' font-weight="normal" font-size="17.89" fill="#000"  stroke="#000" stroke-width="0.2">±</text>
<text x="1139.0 1147.0 1155.0 1163.0" y="219" text-anchor="middle" font-family='"Liberation Serif","Noto Serif CJK SC",serif' font-size="13.8" font-weight="normal" fill="#000" stroke="#000" stroke-width="0.25">5.0V</text>
<rect x="1231" y="204" width="13" height="11" fill="#efebe4" />
<rect x="1231" y="204" width="13" height="1" fill="#ffffff" />
<rect x="1231" y="204" width="1" height="11" fill="#ffffff" />
<rect x="1231" y="214" width="13" height="1" fill="#b3a382" />
<rect x="1243" y="204" width="1" height="11" fill="#b3a382" />
<rect x="1231" y="215" width="13" height="11" fill="#efebe4" />
<rect x="1231" y="215" width="13" height="1" fill="#ffffff" />
<rect x="1231" y="215" width="1" height="11" fill="#ffffff" />
<rect x="1231" y="225" width="13" height="1" fill="#b3a382" />
<rect x="1243" y="215" width="1" height="11" fill="#b3a382" />
<rect x="1237" y="207" width="1" height="1" fill="#000" />
<rect x="1233" y="218" width="9" height="1" fill="#000" />
<rect x="1236" y="208" width="3" height="1" fill="#000" />
<rect x="1234" y="219" width="7" height="1" fill="#000" />
<rect x="1235" y="209" width="5" height="1" fill="#000" />
<rect x="1235" y="220" width="5" height="1" fill="#000" />
<rect x="1234" y="210" width="7" height="1" fill="#000" />
<rect x="1236" y="221" width="3" height="1" fill="#000" />
<rect x="1233" y="211" width="9" height="1" fill="#000" />
<rect x="1237" y="222" width="1" height="1" fill="#000" />
<rect x="1244" y="204" width="94" height="22" fill="#fff" />
<rect x="1244" y="204" width="94" height="1" fill="#b3a382" />
<rect x="1244" y="204" width="1" height="22" fill="#b3a382" />
<rect x="1245" y="205" width="93" height="1" fill="#000" />
<rect x="1245" y="205" width="1" height="20" fill="#000" />
<rect x="1245" y="225" width="93" height="1" fill="#fbfaf4" />
<rect x="1337" y="205" width="1" height="21" fill="#fbfaf4" />
<text x="1270.7 1278.7 1286.7 1294.7 1302.7 1310.7" y="219" text-anchor="middle" font-family='"Liberation Serif","Noto Serif CJK SC",serif' font-size="13.8" font-weight="normal" fill="#000" stroke="#000" stroke-width="0.25">AC/ICP</text>
<text transform="translate(1043.91,252.52) scale(0.881,1)" font-family='"Liberation Serif","Noto Serif CJK SC",serif' font-weight="normal" font-size="13.97" fill="#000"  stroke="#000" stroke-width="0.3">CH3</text>
<rect x="1083" y="236" width="13" height="11" fill="#efebe4" />
<rect x="1083" y="236" width="13" height="1" fill="#ffffff" />
<rect x="1083" y="236" width="1" height="11" fill="#ffffff" />
<rect x="1083" y="246" width="13" height="1" fill="#b3a382" />
<rect x="1095" y="236" width="1" height="11" fill="#b3a382" />
<rect x="1083" y="247" width="13" height="11" fill="#efebe4" />
<rect x="1083" y="247" width="13" height="1" fill="#ffffff" />
<rect x="1083" y="247" width="1" height="11" fill="#ffffff" />
<rect x="1083" y="257" width="13" height="1" fill="#b3a382" />
<rect x="1095" y="247" width="1" height="11" fill="#b3a382" />
<rect x="1089" y="239" width="1" height="1" fill="#000" />
<rect x="1085" y="250" width="9" height="1" fill="#000" />
<rect x="1088" y="240" width="3" height="1" fill="#000" />
<rect x="1086" y="251" width="7" height="1" fill="#000" />
<rect x="1087" y="241" width="5" height="1" fill="#000" />
<rect x="1087" y="252" width="5" height="1" fill="#000" />
<rect x="1086" y="242" width="7" height="1" fill="#000" />
<rect x="1088" y="253" width="3" height="1" fill="#000" />
<rect x="1085" y="243" width="9" height="1" fill="#000" />
<rect x="1089" y="254" width="1" height="1" fill="#000" />
<rect x="1096" y="236" width="94" height="22" fill="#fff" />
<rect x="1096" y="236" width="94" height="1" fill="#b3a382" />
<rect x="1096" y="236" width="1" height="22" fill="#b3a382" />
<rect x="1097" y="237" width="93" height="1" fill="#000" />
<rect x="1097" y="237" width="1" height="20" fill="#000" />
<rect x="1097" y="257" width="93" height="1" fill="#fbfaf4" />
<rect x="1189" y="237" width="1" height="21" fill="#fbfaf4" />
<text transform="translate(1120.00,251.20) scale(1.403,1)" font-family='"Liberation Serif","Noto Serif CJK SC",serif' font-weight="normal" font-size="17.89" fill="#000"  stroke="#000" stroke-width="0.2">±</text>
<text x="1139.0 1147.0 1155.0 1163.0" y="251" text-anchor="middle" font-family='"Liberation Serif","Noto Serif CJK SC",serif' font-size="13.8" font-weight="normal" fill="#000" stroke="#000" stroke-width="0.25">5.0V</text>
<rect x="1231" y="236" width="13" height="11" fill="#efebe4" />
<rect x="1231" y="236" width="13" height="1" fill="#ffffff" />
<rect x="1231" y="236" width="1" height="11" fill="#ffffff" />
<rect x="1231" y="246" width="13" height="1" fill="#b3a382" />
<rect x="1243" y="236" width="1" height="11" fill="#b3a382" />
<rect x="1231" y="247" width="13" height="11" fill="#efebe4" />
<rect x="1231" y="247" width="13" height="1" fill="#ffffff" />
<rect x="1231" y="247" width="1" height="11" fill="#ffffff" />
<rect x="1231" y="257" width="13" height="1" fill="#b3a382" />
<rect x="1243" y="247" width="1" height="11" fill="#b3a382" />
<rect x="1237" y="239" width="1" height="1" fill="#000" />
<rect x="1233" y="250" width="9" height="1" fill="#000" />
<rect x="1236" y="240" width="3" height="1" fill="#000" />
<rect x="1234" y="251" width="7" height="1" fill="#000" />
<rect x="1235" y="241" width="5" height="1" fill="#000" />
<rect x="1235" y="252" width="5" height="1" fill="#000" />
<rect x="1234" y="242" width="7" height="1" fill="#000" />
<rect x="1236" y="253" width="3" height="1" fill="#000" />
<rect x="1233" y="243" width="9" height="1" fill="#000" />
<rect x="1237" y="254" width="1" height="1" fill="#000" />
<rect x="1244" y="236" width="94" height="22" fill="#fff" />
<rect x="1244" y="236" width="94" height="1" fill="#b3a382" />
<rect x="1244" y="236" width="1" height="22" fill="#b3a382" />
<rect x="1245" y="237" width="93" height="1" fill="#000" />
<rect x="1245" y="237" width="1" height="20" fill="#000" />
<rect x="1245" y="257" width="93" height="1" fill="#fbfaf4" />
<rect x="1337" y="237" width="1" height="21" fill="#fbfaf4" />
<text x="1270.7 1278.7 1286.7 1294.7 1302.7 1310.7" y="251" text-anchor="middle" font-family='"Liberation Serif","Noto Serif CJK SC",serif' font-size="13.8" font-weight="normal" fill="#000" stroke="#000" stroke-width="0.25">AC/ICP</text>
<text transform="translate(1043.91,285.52) scale(0.872,1)" font-family='"Liberation Serif","Noto Serif CJK SC",serif' font-weight="normal" font-size="13.97" fill="#000"  stroke="#000" stroke-width="0.3">CH4</text>
<rect x="1083" y="269" width="13" height="11" fill="#efebe4" />
<rect x="1083" y="269" width="13" height="1" fill="#ffffff" />
<rect x="1083" y="269" width="1" height="11" fill="#ffffff" />
<rect x="1083" y="279" width="13" height="1" fill="#b3a382" />
<rect x="1095" y="269" width="1" height="11" fill="#b3a382" />
<rect x="1083" y="280" width="13" height="11" fill="#efebe4" />
<rect x="1083" y="280" width="13" height="1" fill="#ffffff" />
<rect x="1083" y="280" width="1" height="11" fill="#ffffff" />
<rect x="1083" y="290" width="13" height="1" fill="#b3a382" />
<rect x="1095" y="280" width="1" height="11" fill="#b3a382" />
<rect x="1089" y="272" width="1" height="1" fill="#000" />
<rect x="1085" y="283" width="9" height="1" fill="#000" />
<rect x="1088" y="273" width="3" height="1" fill="#000" />
<rect x="1086" y="284" width="7" height="1" fill="#000" />
<rect x="1087" y="274" width="5" height="1" fill="#000" />
<rect x="1087" y="285" width="5" height="1" fill="#000" />
<rect x="1086" y="275" width="7" height="1" fill="#000" />
<rect x="1088" y="286" width="3" height="1" fill="#000" />
<rect x="1085" y="276" width="9" height="1" fill="#000" />
<rect x="1089" y="287" width="1" height="1" fill="#000" />
<rect x="1096" y="269" width="94" height="22" fill="#fff" />
<rect x="1096" y="269" width="94" height="1" fill="#b3a382" />
<rect x="1096" y="269" width="1" height="22" fill="#b3a382" />
<rect x="1097" y="270" width="93" height="1" fill="#000" />
<rect x="1097" y="270" width="1" height="20" fill="#000" />
<rect x="1097" y="290" width="93" height="1" fill="#fbfaf4" />
<rect x="1189" y="270" width="1" height="21" fill="#fbfaf4" />
<text transform="translate(1120.00,284.20) scale(1.403,1)" font-family='"Liberation Serif","Noto Serif CJK SC",serif' font-weight="normal" font-size="17.89" fill="#000"  stroke="#000" stroke-width="0.2">±</text>
<text x="1139.0 1147.0 1155.0 1163.0" y="284" text-anchor="middle" font-family='"Liberation Serif","Noto Serif CJK SC",serif' font-size="13.8" font-weight="normal" fill="#000" stroke="#000" stroke-width="0.25">5.0V</text>
<rect x="1231" y="269" width="13" height="11" fill="#efebe4" />
<rect x="1231" y="269" width="13" height="1" fill="#ffffff" />
<rect x="1231" y="269" width="1" height="11" fill="#ffffff" />
<rect x="1231" y="279" width="13" height="1" fill="#b3a382" />
<rect x="1243" y="269" width="1" height="11" fill="#b3a382" />
<rect x="1231" y="280" width="13" height="11" fill="#efebe4" />
<rect x="1231" y="280" width="13" height="1" fill="#ffffff" />
<rect x="1231" y="280" width="1" height="11" fill="#ffffff" />
<rect x="1231" y="290" width="13" height="1" fill="#b3a382" />
<rect x="1243" y="280" width="1" height="11" fill="#b3a382" />
<rect x="1237" y="272" width="1" height="1" fill="#000" />
<rect x="1233" y="283" width="9" height="1" fill="#000" />
<rect x="1236" y="273" width="3" height="1" fill="#000" />
<rect x="1234" y="284" width="7" height="1" fill="#000" />
<rect x="1235" y="274" width="5" height="1" fill="#000" />
<rect x="1235" y="285" width="5" height="1" fill="#000" />
<rect x="1234" y="275" width="7" height="1" fill="#000" />
<rect x="1236" y="286" width="3" height="1" fill="#000" />
<rect x="1233" y="276" width="9" height="1" fill="#000" />
<rect x="1237" y="287" width="1" height="1" fill="#000" />
<rect x="1244" y="269" width="94" height="22" fill="#fff" />
<rect x="1244" y="269" width="94" height="1" fill="#b3a382" />
<rect x="1244" y="269" width="1" height="22" fill="#b3a382" />
<rect x="1245" y="270" width="93" height="1" fill="#000" />
<rect x="1245" y="270" width="1" height="20" fill="#000" />
<rect x="1245" y="290" width="93" height="1" fill="#fbfaf4" />
<rect x="1337" y="270" width="1" height="21" fill="#fbfaf4" />
<text x="1270.7 1278.7 1286.7 1294.7 1302.7 1310.7" y="284" text-anchor="middle" font-family='"Liberation Serif","Noto Serif CJK SC",serif' font-size="13.8" font-weight="normal" fill="#000" stroke="#000" stroke-width="0.25">AC/ICP</text>
<text transform="translate(1012.90,315.62) scale(1.740,1)" font-family='"Liberation Serif","Noto Serif CJK SC",serif' font-weight="500" font-size="15.37" fill="#000"  stroke="#000" stroke-width="0.35" vector-effect="non-scaling-stroke" stroke-linejoin="round">采样率</text>
<text transform="translate(1224.77,315.54) scale(1.811,1)" font-family='"Liberation Serif","Noto Serif CJK SC",serif' font-weight="500" font-size="14.58" fill="#000"  stroke="#000" stroke-width="0.35" vector-effect="non-scaling-stroke" stroke-linejoin="round">FIFO长度</text>
<g shape-rendering="geometricPrecision">
<circle cx="1106.8" cy="399.7" r="40.5" fill="url(#gRing)"/>
<circle cx="1106.8" cy="399.7" r="34.5" fill="#c8c4b0" opacity="0.55"/>
<circle cx="1106.8" cy="399.7" r="33.2" fill="url(#gBall)"/>
<ellipse cx="1091.8" cy="382.7" rx="11" ry="8" fill="url(#gHi)" transform="rotate(-35 1091.8 382.7)"/>
<circle cx="1092" cy="409.7" r="7.2" fill="url(#gDot)"/>
</g>
<g shape-rendering="geometricPrecision">
<circle cx="1300" cy="399.7" r="40.5" fill="url(#gRing)"/>
<circle cx="1300" cy="399.7" r="34.5" fill="#c8c4b0" opacity="0.55"/>
<circle cx="1300" cy="399.7" r="33.2" fill="url(#gBall)"/>
<ellipse cx="1285" cy="382.7" rx="11" ry="8" fill="url(#gHi)" transform="rotate(-35 1285 382.7)"/>
<circle cx="1313.9" cy="411.8" r="7.2" fill="url(#gDot)"/>
</g>
<g shape-rendering="geometricPrecision" stroke="#1a1a1a" stroke-width="1" fill="none">
<path d="M1110.5,351.8 L1110.5,358"/>
<path d="M1076.8,362.8 L1081,368.6"/>
<path d="M1143,367.2 L1137.2,371.2"/>
<path d="M1059.1,393 L1066.1,394.5"/>
<path d="M1149.4,399.5 L1155.7,399.5"/>
<path d="M1068.4,427.2 L1073.7,424"/>
<path d="M1137.8,428 L1143.7,432.8"/>
<path d="M1111.1,442.3 L1112.6,448.2"/>
<path d="M1265.9,366.1 L1272.2,370.8"/>
<path d="M1333.2,365.1 L1328,370.1"/>
<path d="M1264.2,432.8 L1270,428"/>
<path d="M1332.2,427.2 L1338,431.8"/>
</g>
<text transform="translate(1082.16,344.74) scale(1.274,1)" font-family='"Liberation Serif","Noto Serif CJK SC",serif' font-weight="normal" font-size="13.24" fill="#111"  stroke="#111" stroke-width="0.12">500KHz</text>
<text transform="translate(1045.49,350.67) scale(1.190,1)" font-family='"Liberation Serif","Noto Serif CJK SC",serif' font-weight="normal" font-size="12.69" fill="#111"  stroke="#111" stroke-width="0.12">1MHz</text>
<text transform="translate(1133.61,350.74) scale(1.345,1)" font-family='"Liberation Serif","Noto Serif CJK SC",serif' font-weight="normal" font-size="12.79" fill="#111"  stroke="#111" stroke-width="0.12">200KHz</text>
<text transform="translate(1018.39,393.87) scale(1.196,1)" font-family='"Liberation Serif","Noto Serif CJK SC",serif' font-weight="normal" font-size="12.69" fill="#111"  stroke="#111" stroke-width="0.12">2MHz</text>
<text transform="translate(1156.59,402.45) scale(1.430,1)" font-family='"Liberation Serif","Noto Serif CJK SC",serif' font-weight="normal" font-size="12.35" fill="#111"  stroke="#111" stroke-width="0.12">100KHz</text>
<text transform="translate(1030.25,443.55) scale(1.202,1)" font-family='"Liberation Serif","Noto Serif CJK SC",serif' font-weight="normal" font-size="12.54" fill="#111"  stroke="#111" stroke-width="0.12">5MHz</text>
<text transform="translate(1136.95,451.54) scale(1.312,1)" font-family='"Liberation Serif","Noto Serif CJK SC",serif' font-weight="normal" font-size="12.94" fill="#111"  stroke="#111" stroke-width="0.12">50KHz</text>
<text transform="translate(1088.12,461.63) scale(1.270,1)" font-family='"Liberation Serif","Noto Serif CJK SC",serif' font-weight="normal" font-size="13.38" fill="#111"  stroke="#111" stroke-width="0.12">20KHz</text>
<text transform="translate(1224.93,351.93) scale(1.451,1)" font-family='"Liberation Serif","Noto Serif CJK SC",serif' font-weight="normal" font-size="13.53" fill="#111"  stroke="#111" stroke-width="0.12">16Ksa</text>
<text transform="translate(1324.02,350.93) scale(1.421,1)" font-family='"Liberation Serif","Noto Serif CJK SC",serif' font-weight="normal" font-size="13.68" fill="#111"  stroke="#111" stroke-width="0.12">32Ksa</text>
<text transform="translate(1228.41,449.73) scale(1.463,1)" font-family='"Liberation Serif","Noto Serif CJK SC",serif' font-weight="normal" font-size="13.53" fill="#111"  stroke="#111" stroke-width="0.12">8Ksa</text>
<text transform="translate(1331.82,449.73) scale(1.442,1)" font-family='"Liberation Serif","Noto Serif CJK SC",serif' font-weight="normal" font-size="13.53" fill="#111"  stroke="#111" stroke-width="0.12">64Ksa</text>
</g>
<g id="box-trigger">
<rect x="999" y="476" width="1" height="137" fill="#d6e8c8" />
<rect x="1000" y="475" width="401" height="1" fill="#d6e8c8" />
<rect x="1398" y="478" width="1" height="133" fill="#d6e8c8" />
<rect x="1002" y="610" width="397" height="1" fill="#d6e8c8" />
<rect x="1002" y="478" width="1" height="133" fill="#f9f5e8" />
<rect x="1002" y="478" width="397" height="1" fill="#f9f5e8" />
<rect x="1401" y="476" width="1" height="137" fill="#f9f5e8" />
<rect x="1000" y="613" width="402" height="1" fill="#f9f5e8" />
<rect x="1000" y="476" width="401" height="1" fill="#24882a" />
<rect x="1000" y="477" width="401" height="1" fill="#166318" />
<rect x="1000" y="611" width="401" height="1" fill="#24882a" />
<rect x="1000" y="612" width="401" height="1" fill="#166318" />
<rect x="1000" y="476" width="1" height="137" fill="#24882a" />
<rect x="1001" y="477" width="1" height="135" fill="#166318" />
<rect x="1399" y="476" width="1" height="137" fill="#24882a" />
<rect x="1400" y="476" width="1" height="137" fill="#166318" />
<text transform="translate(1065.12,496.47) scale(1.636,1)" font-family='"Liberation Serif","Noto Serif CJK SC",serif' font-weight="500" font-size="13.80" fill="#000"  stroke="#000" stroke-width="0.35" vector-effect="non-scaling-stroke" stroke-linejoin="round">触发信源</text>
<text transform="translate(1177.31,496.67) scale(1.657,1)" font-family='"Liberation Serif","Noto Serif CJK SC",serif' font-weight="500" font-size="13.80" fill="#000"  stroke="#000" stroke-width="0.35" vector-effect="non-scaling-stroke" stroke-linejoin="round">触发方式</text>
<text transform="translate(1283.11,496.67) scale(1.655,1)" font-family='"Liberation Serif","Noto Serif CJK SC",serif' font-weight="500" font-size="13.80" fill="#000"  stroke="#000" stroke-width="0.35" vector-effect="non-scaling-stroke" stroke-linejoin="round">触发边沿</text>
<rect x="1104" y="517" width="25" height="84" fill="#009999" />
<rect x="1104" y="517" width="1" height="84" fill="#6fbcbc" />
<rect x="1128" y="517" width="1" height="84" fill="#9ff4f4" />
<rect x="1104" y="601" width="25" height="1" fill="#7ff" />
<rect x="1102" y="507" width="28" height="10" fill="#efebe4" />
<rect x="1102" y="507" width="28" height="1" fill="#ffffff" />
<rect x="1102" y="512" width="28" height="1" fill="#b3a382" />
<rect x="1102" y="513" width="28" height="1" fill="#ffffff" />
<rect x="1102" y="516" width="28" height="1" fill="#b3a382" />
<rect x="1102" y="507" width="1" height="10" fill="#ffffff" />
<rect x="1129" y="507" width="1" height="10" fill="#b3a382" />
<rect x="1212" y="517" width="23" height="83" fill="#009999" />
<rect x="1212" y="517" width="1" height="83" fill="#6fbcbc" />
<rect x="1234" y="517" width="1" height="83" fill="#9ff4f4" />
<rect x="1212" y="600" width="23" height="1" fill="#7ff" />
<rect x="1210" y="507" width="26" height="10" fill="#efebe4" />
<rect x="1210" y="507" width="26" height="1" fill="#ffffff" />
<rect x="1210" y="512" width="26" height="1" fill="#b3a382" />
<rect x="1210" y="513" width="26" height="1" fill="#ffffff" />
<rect x="1210" y="516" width="26" height="1" fill="#b3a382" />
<rect x="1210" y="507" width="1" height="10" fill="#ffffff" />
<rect x="1235" y="507" width="1" height="10" fill="#b3a382" />
<rect x="1314" y="517" width="17" height="82" fill="#009999" />
<rect x="1314" y="517" width="1" height="82" fill="#6fbcbc" />
<rect x="1330" y="517" width="1" height="82" fill="#9ff4f4" />
<rect x="1314" y="599" width="17" height="1" fill="#7ff" />
<rect x="1312" y="507" width="21" height="10" fill="#efebe4" />
<rect x="1312" y="507" width="21" height="1" fill="#ffffff" />
<rect x="1312" y="512" width="21" height="1" fill="#b3a382" />
<rect x="1312" y="513" width="21" height="1" fill="#ffffff" />
<rect x="1312" y="516" width="21" height="1" fill="#b3a382" />
<rect x="1312" y="507" width="1" height="10" fill="#ffffff" />
<rect x="1332" y="507" width="1" height="10" fill="#b3a382" />
<text transform="translate(1061.57,516.70) scale(1.054,1)" font-family='"Liberation Serif","Noto Serif CJK SC",serif' font-weight="normal" font-size="14.85" fill="#000"  stroke="#000" stroke-width="0.35">CH1</text>
<rect x="1094" y="512" width="7" height="1" fill="#000" />
<text transform="translate(1061.58,538.95) scale(1.048,1)" font-family='"Liberation Serif","Noto Serif CJK SC",serif' font-weight="normal" font-size="14.85" fill="#000"  stroke="#000" stroke-width="0.35">CH2</text>
<rect x="1094" y="534" width="7" height="1" fill="#000" />
<text transform="translate(1061.58,561.20) scale(1.036,1)" font-family='"Liberation Serif","Noto Serif CJK SC",serif' font-weight="normal" font-size="14.85" fill="#000"  stroke="#000" stroke-width="0.35">CH3</text>
<rect x="1094" y="556" width="7" height="1" fill="#000" />
<text transform="translate(1061.59,583.45) scale(1.025,1)" font-family='"Liberation Serif","Noto Serif CJK SC",serif' font-weight="normal" font-size="14.85" fill="#000"  stroke="#000" stroke-width="0.35">CH4</text>
<rect x="1094" y="579" width="7" height="1" fill="#000" />
<text transform="translate(1061.91,605.85) scale(0.936,1)" font-family='"Liberation Serif","Noto Serif CJK SC",serif' font-weight="normal" font-size="15.30" fill="#000"  stroke="#000" stroke-width="0.35">EXT</text>
<rect x="1094" y="601" width="7" height="1" fill="#000" />
<text transform="translate(1159.45,516.77) scale(1.452,1)" font-family='"Liberation Serif","Noto Serif CJK SC",serif' font-weight="400" font-size="13.62" fill="#000"  stroke="#000" stroke-width="0.4" vector-effect="non-scaling-stroke" stroke-linejoin="round">自动</text>
<rect x="1202" y="512" width="7" height="1" fill="#000" />
<text transform="translate(1160.94,604.46) scale(1.506,1)" font-family='"Liberation Serif","Noto Serif CJK SC",serif' font-weight="400" font-size="12.69" fill="#000"  stroke="#000" stroke-width="0.4" vector-effect="non-scaling-stroke" stroke-linejoin="round">正常</text>
<rect x="1202" y="600" width="7" height="1" fill="#000" />
<text transform="translate(1262.22,516.77) scale(1.434,1)" font-family='"Liberation Serif","Noto Serif CJK SC",serif' font-weight="400" font-size="13.66" fill="#000"  stroke="#000" stroke-width="0.4" vector-effect="non-scaling-stroke" stroke-linejoin="round">上升</text>
<rect x="1304" y="512" width="7" height="1" fill="#000" />
<text transform="translate(1262.22,603.99) scale(1.454,1)" font-family='"Liberation Serif","Noto Serif CJK SC",serif' font-weight="400" font-size="13.40" fill="#000"  stroke="#000" stroke-width="0.4" vector-effect="non-scaling-stroke" stroke-linejoin="round">下降</text>
<rect x="1304" y="599" width="7" height="1" fill="#000" />
</g>
<g id="box-channels">
<rect x="998" y="614" width="1" height="70" fill="#d6e8c8" />
<rect x="999" y="613" width="403" height="1" fill="#d6e8c8" />
<rect x="1399" y="616" width="1" height="66" fill="#d6e8c8" />
<rect x="1001" y="681" width="399" height="1" fill="#d6e8c8" />
<rect x="1001" y="616" width="1" height="66" fill="#f9f5e8" />
<rect x="1001" y="616" width="399" height="1" fill="#f9f5e8" />
<rect x="1402" y="614" width="1" height="70" fill="#f9f5e8" />
<rect x="999" y="684" width="404" height="1" fill="#f9f5e8" />
<rect x="999" y="614" width="403" height="1" fill="#24882a" />
<rect x="999" y="615" width="403" height="1" fill="#166318" />
<rect x="999" y="682" width="403" height="1" fill="#24882a" />
<rect x="999" y="683" width="403" height="1" fill="#166318" />
<rect x="999" y="614" width="1" height="70" fill="#24882a" />
<rect x="1000" y="615" width="1" height="68" fill="#166318" />
<rect x="1400" y="614" width="1" height="70" fill="#24882a" />
<rect x="1401" y="614" width="1" height="70" fill="#166318" />
<text transform="translate(1051.49,631.74) scale(0.987,1)" font-family='"Liberation Serif","Noto Serif CJK SC",serif' font-weight="normal" font-size="12.79" fill="#000"  stroke="#000" stroke-width="0.3">CH1</text>
<text transform="translate(1136.88,631.74) scale(1.012,1)" font-family='"Liberation Serif","Noto Serif CJK SC",serif' font-weight="normal" font-size="12.79" fill="#000"  stroke="#000" stroke-width="0.3">CH2</text>
<rect x="1136.5" y="620.5" width="26" height="16" fill="none" stroke="#000" stroke-width="1" stroke-dasharray="1,1"/>
<rect x="1043" y="638" width="47" height="35" fill="#e0e0e0" />
<polygon points="1043,638 1090,638 1087,641 1046,641 1046,670 1043,673" fill="#a3a3a3"/>
<polygon points="1090,638 1090,673 1043,673 1046,670 1087,670 1087,641" fill="#ffffff"/>
<rect x="1128" y="638" width="47" height="35" fill="#9bcf3c" />
<polygon points="1128,638 1175,638 1171,642 1132,642" fill="#ade547"/>
<polygon points="1128,638 1132,642 1132,669 1128,673" fill="#a7e046"/>
<polygon points="1175,638 1175,673 1171,669 1171,642" fill="#6b9821"/>
<polygon points="1128,673 1132,669 1171,669 1175,673" fill="#5c8619"/>
<rect x="1174" y="638" width="1" height="35" fill="#557c16" />
<rect x="1128" y="672" width="47" height="1" fill="#4f7413" />
<rect x="1212" y="638" width="47" height="35" fill="#9bcf3c" />
<polygon points="1212,638 1259,638 1255,642 1216,642" fill="#ade547"/>
<polygon points="1212,638 1216,642 1216,669 1212,673" fill="#a7e046"/>
<polygon points="1259,638 1259,673 1255,669 1255,642" fill="#6b9821"/>
<polygon points="1212,673 1216,669 1255,669 1259,673" fill="#5c8619"/>
<rect x="1258" y="638" width="1" height="35" fill="#557c16" />
<rect x="1212" y="672" width="47" height="1" fill="#4f7413" />
<rect x="1311" y="638" width="47" height="35" fill="#9bcf3c" />
<polygon points="1311,638 1358,638 1354,642 1315,642" fill="#ade547"/>
<polygon points="1311,638 1315,642 1315,669 1311,673" fill="#a7e046"/>
<polygon points="1358,638 1358,673 1354,669 1354,642" fill="#6b9821"/>
<polygon points="1311,673 1315,669 1354,669 1358,673" fill="#5c8619"/>
<rect x="1357" y="638" width="1" height="35" fill="#557c16" />
<rect x="1311" y="672" width="47" height="1" fill="#4f7413" />
</g>
<g id="controls">
<rect x="991" y="698" width="425" height="157" fill="#f3efde" />
<rect x="991" y="698" width="425" height="1" fill="#fdfcea" />
<rect x="991" y="698" width="1" height="157" fill="#fdfcea" />
<rect x="992" y="699" width="423" height="1" fill="#fffff2" />
<rect x="992" y="699" width="1" height="156" fill="#fffff2" />
<rect x="993" y="700" width="421" height="1" fill="#fffef0" />
<rect x="993" y="700" width="1" height="155" fill="#fffef0" />
<rect x="994" y="701" width="419" height="1" fill="#faf7e6" />
<rect x="994" y="701" width="1" height="154" fill="#faf7e6" />
<rect x="1415" y="698" width="1" height="157" fill="#8e8c7c" />
<rect x="991" y="854" width="425" height="1" fill="#8e8c7c" />
<rect x="1414" y="699" width="1" height="156" fill="#a9a695" />
<rect x="992" y="853" width="423" height="1" fill="#a9a695" />
<rect x="1413" y="700" width="1" height="155" fill="#c6c2b0" />
<rect x="993" y="852" width="421" height="1" fill="#c6c2b0" />
<rect x="1412" y="701" width="1" height="154" fill="#e0dcca" />
<rect x="994" y="851" width="419" height="1" fill="#e0dcca" />
<rect x="1004" y="724" width="140" height="16" fill="#efebdb" />
<text transform="translate(1006.03,736.27) scale(1.281,1)" font-family='"Liberation Sans","Noto Sans CJK SC",sans-serif' font-weight="normal" font-size="12.29" fill="#1a1a1a" >连续存盘&amp;波形浏览</text>
<rect x="1003" y="743" width="286" height="23" fill="#000" />
<polygon points="1003,743 1289,743 1286,746 1006,746 1006,763 1003,766" fill="#b9b8a4"/>
<polygon points="1289,743 1289,766 1003,766 1006,763 1286,763 1286,746" fill="#e8e5d1"/>
<rect x="1002.5" y="780.5" width="291" height="17" rx="2" fill="url(#gProg)" stroke="#b4b4b4" stroke-width="1" shape-rendering="geometricPrecision"/>
<rect x="1004" y="781" width="288" height="1" fill="#fafafa" />
<rect x="1290" y="782" width="3" height="15" fill="#b2b2b2" opacity="0.55"/>
<rect x="1004" y="806" width="69" height="43" fill="#e3dfcc" />
<polygon points="1004,806 1073,806 1070,809 1007,809 1007,846 1004,849" fill="#b9b8a4"/>
<polygon points="1073,806 1073,849 1004,849 1007,846 1070,846 1070,809" fill="#e8e5d1"/>
<rect x="1007" y="809" width="63" height="37" fill="url(#gRed)" />
<clipPath id="cpRed"><rect x="1007" y="809" width="63" height="37"/></clipPath>
<ellipse cx="1019" cy="818" rx="18" ry="9" fill="url(#gRedHi)" clip-path="url(#cpRed)" shape-rendering="geometricPrecision"/>
<rect x="1007" y="845" width="63" height="1" fill="#b01400" opacity="0.5"/>
<rect x="1069" y="809" width="1" height="37" fill="#c01800" opacity="0.5"/>
<rect x="1298" y="703" width="95" height="34" fill="url(#gNavy)" />
<polygon points="1298,703 1393,703 1390,706 1301,706" fill="#111152"/>
<polygon points="1298,703 1301,706 1301,734 1298,737" fill="#2b2b7a"/>
<polygon points="1393,703 1393,737 1390,734 1390,706" fill="#09093c"/>
<polygon points="1298,737 1301,734 1390,734 1393,737" fill="#0a0a3e"/>
<rect x="1299" y="704" width="1" height="32" fill="#1d1d66" />
<rect x="1298.5" y="703.5" width="94" height="33" fill="none" stroke="#000018" stroke-width="1"/>
<rect x="1298" y="740" width="95" height="34" fill="url(#gNavy)" />
<polygon points="1298,740 1393,740 1390,743 1301,743" fill="#111152"/>
<polygon points="1298,740 1301,743 1301,771 1298,774" fill="#2b2b7a"/>
<polygon points="1393,740 1393,774 1390,771 1390,743" fill="#09093c"/>
<polygon points="1298,774 1301,771 1390,771 1393,774" fill="#0a0a3e"/>
<rect x="1299" y="741" width="1" height="32" fill="#1d1d66" />
<rect x="1298.5" y="740.5" width="94" height="33" fill="none" stroke="#000018" stroke-width="1"/>
<rect x="1094" y="806" width="83" height="40" fill="url(#gNavy)" />
<polygon points="1094,806 1177,806 1174,809 1097,809" fill="#111152"/>
<polygon points="1094,806 1097,809 1097,843 1094,846" fill="#2b2b7a"/>
<polygon points="1177,806 1177,846 1174,843 1174,809" fill="#09093c"/>
<polygon points="1094,846 1097,843 1174,843 1177,846" fill="#0a0a3e"/>
<rect x="1095" y="807" width="1" height="38" fill="#1d1d66" />
<rect x="1094.5" y="806.5" width="82" height="39" fill="none" stroke="#000018" stroke-width="1"/>
<rect x="1203" y="806" width="86" height="40" fill="url(#gNavy)" />
<polygon points="1203,806 1289,806 1286,809 1206,809" fill="#111152"/>
<polygon points="1203,806 1206,809 1206,843 1203,846" fill="#2b2b7a"/>
<polygon points="1289,806 1289,846 1286,843 1286,809" fill="#09093c"/>
<polygon points="1203,846 1206,843 1286,843 1289,846" fill="#0a0a3e"/>
<rect x="1204" y="807" width="1" height="38" fill="#1d1d66" />
<rect x="1203.5" y="806.5" width="85" height="39" fill="none" stroke="#000018" stroke-width="1"/>
<rect x="1310" y="806" width="82" height="40" fill="url(#gNavy)" />
<polygon points="1310,806 1392,806 1389,809 1313,809" fill="#111152"/>
<polygon points="1310,806 1313,809 1313,843 1310,846" fill="#2b2b7a"/>
<polygon points="1392,806 1392,846 1389,843 1389,809" fill="#09093c"/>
<polygon points="1310,846 1313,843 1389,843 1392,846" fill="#0a0a3e"/>
<rect x="1311" y="807" width="1" height="38" fill="#1d1d66" />
<rect x="1310.5" y="806.5" width="81" height="39" fill="none" stroke="#000018" stroke-width="1"/>
<text transform="translate(1304.18,724.85) scale(1.423,1)" font-family='"Liberation Serif","Noto Serif CJK SC",serif' font-weight="400" font-size="18.30" fill="#fff"  stroke="#fff" stroke-width="0.45" vector-effect="non-scaling-stroke" stroke-linejoin="round">校</text>
<text transform="translate(1359.11,724.87) scale(1.463,1)" font-family='"Liberation Serif","Noto Serif CJK SC",serif' font-weight="400" font-size="18.11" fill="#fff"  stroke="#fff" stroke-width="0.45" vector-effect="non-scaling-stroke" stroke-linejoin="round">准</text>
<text transform="translate(1303.88,761.85) scale(1.487,1)" font-family='"Liberation Serif","Noto Serif CJK SC",serif' font-weight="400" font-size="18.30" fill="#fff"  stroke="#fff" stroke-width="0.45" vector-effect="non-scaling-stroke" stroke-linejoin="round">浏</text>
<text transform="translate(1360.22,761.85) scale(1.399,1)" font-family='"Liberation Serif","Noto Serif CJK SC",serif' font-weight="400" font-size="18.30" fill="#fff"  stroke="#fff" stroke-width="0.45" vector-effect="non-scaling-stroke" stroke-linejoin="round">览</text>
<text transform="translate(1102.01,832.96) scale(1.526,1)" font-family='"Liberation Serif","Noto Serif CJK SC",serif' font-weight="400" font-size="21.58" fill="#fff"  stroke="#fff" stroke-width="0.45" vector-effect="non-scaling-stroke" stroke-linejoin="round">采集</text>
<text transform="translate(1214.03,832.96) scale(1.505,1)" font-family='"Liberation Serif","Noto Serif CJK SC",serif' font-weight="400" font-size="21.58" fill="#fff"  stroke="#fff" stroke-width="0.45" vector-effect="non-scaling-stroke" stroke-linejoin="round">停止</text>
<text transform="translate(1318.17,833.12) scale(1.459,1)" font-family='"Liberation Serif","Noto Serif CJK SC",serif' font-weight="400" font-size="22.28" fill="#fff"  stroke="#fff" stroke-width="0.45" vector-effect="non-scaling-stroke" stroke-linejoin="round">退出</text>
<rect x="1309" y="778" width="30" height="22" fill="#fff" />
<rect x="1309" y="778" width="30" height="1" fill="#c8b888" />
<rect x="1309" y="778" width="1" height="22" fill="#c8b888" />
<rect x="1310" y="779" width="29" height="1" fill="#000" />
<rect x="1310" y="779" width="1" height="20" fill="#000" />
<rect x="1310" y="799" width="29" height="1" fill="#fbfaf0" />
<rect x="1338" y="779" width="1" height="21" fill="#fbfaf0" />
<rect x="1311" y="798" width="27" height="1" fill="#f4f2e6" />
<rect x="1337" y="780" width="1" height="19" fill="#f4f2e6" />
<rect x="1344" y="778" width="35" height="17" fill="#efebdb" />
<text transform="translate(1344.72,790.38) scale(1.289,1)" font-family='"Liberation Sans","Noto Sans CJK SC",sans-serif' font-weight="normal" font-size="12.42" fill="#1a1a1a" >存盘</text>
</g>
<g id="ime-bar" shape-rendering="geometricPrecision">
<rect x="1179.5" y="611.5" width="168" height="23" rx="1.5" fill="url(#gIme)" stroke="#b4c6dc" stroke-width="1"/>
<g transform="rotate(-13.8 1176.9 620.7)"><rect x="1165.1" y="609.1" width="23.6" height="23.6" rx="3.4" fill="url(#gSogou)"/>
<g transform="translate(1176.9 620.9) skewX(-12) translate(-1176.9 -620.9)"><text transform="translate(1166.98,629.16) scale(1.316,1)" font-family='"Liberation Sans","Noto Sans CJK SC",sans-serif' font-weight="bold" font-size="23.66" fill="#fff" stroke="#fff" stroke-width="0.5" stroke-linejoin="round">S</text></g>
</g>
<text transform="translate(1195.56,628.55) scale(1.159,1)" font-family='"Liberation Sans","Noto Sans CJK SC",sans-serif' font-weight="bold" font-size="14.48" fill="#1f6fd1" >中</text>
<path d="M1218.67,624.90 A7.3,7.3 0 1 0 1227.90,615.67 A6.6,6.6 0 0 1 1218.67,624.90 Z" fill="#1f6fd1"/>
<circle cx="1243.4" cy="620.6" r="1.7" fill="none" stroke="#1f6fd1" stroke-width="1.2"/><path d="M1249.5,623.5 a1.9,1.9 0 1 1 3.3,1.6 q-0.6,2.3 -3,3.6 q1.3,-1.6 1.1,-3.2 a1.9,1.9 0 0 1 -1.4,-2 Z" fill="#1f6fd1"/>
<rect x="1262" y="616.9" width="15.9" height="12" rx="2.2" fill="#1f6fd1"/>
<g fill="#fff"><rect x="1264" y="618.9" width="1.7" height="1.6"/><rect x="1266.9" y="618.9" width="1.7" height="1.6"/><rect x="1269.8" y="618.9" width="1.7" height="1.6"/><rect x="1272.7" y="618.9" width="3.2" height="1.6"/><rect x="1264" y="621.9" width="1.2" height="1.7"/><rect x="1266.2" y="621.9" width="1.8" height="1.7"/><rect x="1269.1" y="621.9" width="1.8" height="1.7"/><rect x="1272" y="621.9" width="1.8" height="1.7"/><rect x="1274.9" y="621.9" width="1" height="1.7"/><rect x="1264" y="625" width="1.7" height="1.8"/><rect x="1266.9" y="625" width="9" height="1.8"/></g>
<circle cx="1291.8" cy="619" r="3.2" fill="#1f6fd1"/><path d="M1286,627.2 L1288.2,622.6 Q1292,621.8 1295.6,622.6 L1296.6,624 H1291.3 V629.7 H1288.6 L1288,627.6 Z" fill="#1f6fd1"/>
<rect x="1291.1" y="623.8" width="11" height="7.1" rx="1.4" fill="#1f6fd1" stroke="#fff" stroke-width="0.6"/>
<text transform="translate(1292.33,629.64) scale(1.255,1)" font-family='"Liberation Sans","Noto Sans CJK SC",sans-serif' font-weight="bold" font-size="6.20" fill="#fff"  stroke="#fff" stroke-width="0.1">13</text>
<path d="M1307,619.8 L1311,616.6 Q1313.9,618.6 1316.8,616.6 L1320.8,619.8 L1318.8,622.8 L1317.4,621.9 V629.6 H1310.4 V621.9 L1309,622.8 Z" fill="#1f6fd1"/>
<path d="M1330,629 L1337.2,621.6" stroke="#1f6fd1" stroke-width="3.1" stroke-linecap="round" fill="none"/><path d="M1343.2,618.6 a4.4,4.4 0 1 1 -5,-2.8 l-0.4,3.1 l2.5,1.7 Z" fill="#1f6fd1"/>
<circle cx="1343.7" cy="613" r="3.9" fill="#f2300e"/>
</g>
<g id="netmon-dark" shape-rendering="geometricPrecision">
<path d="M742,803.4 H809.8 A20.5,20.5 0 0 1 809.8,844.4 H742 Z" fill="#2f2f2f" opacity="0.93"/>
<path d="M768,823.8 H830" stroke="#242424" stroke-width="1"/>
<circle cx="742.3" cy="824.4" r="29.6" fill="#2a2a2a" opacity="0.35"/>
<clipPath id="cpD1"><rect x="700" y="780" width="90" height="46"/></clipPath><clipPath id="cpD2"><rect x="700" y="826" width="90" height="40"/></clipPath>
<circle cx="742.3" cy="823.8" r="28.8" fill="#323232" clip-path="url(#cpD1)"/>
<circle cx="742.3" cy="823.8" r="28.8" fill="#3b3b3b" clip-path="url(#cpD2)"/>
<circle cx="742.3" cy="823.8" r="28.3" fill="none" stroke="#414141" stroke-width="1"/>
<path d="M743.1,798.6 A25.2,25.2 0 1 1 724.08,840.33" fill="none" stroke="url(#gArc)" stroke-width="1.9" stroke-linecap="round"/>
<text transform="translate(723.16,834.39) scale(0.870,1)" font-family='"Liberation Sans","Noto Sans CJK SC",sans-serif' font-weight="normal" font-size="30.85" fill="#f4f4f4" stroke="#343434" stroke-width="1.1">64</text>
<text transform="translate(752.68,833.90) scale(1.053,1)" font-family='"Liberation Sans","Noto Sans CJK SC",sans-serif' font-weight="bold" font-size="10.28" fill="#f4f4f4" >%</text>
<path d="M773.9,814.9 L777.1,811 L780.3,814.9 H778 V817.6 H776.2 V814.9 Z" fill="#f08a18"/>
<path d="M773.9,834.4 L777.1,838.3 L780.3,834.4 H778 V831.8 H776.2 V834.4 Z" fill="#2fc02f"/>
<text transform="translate(792.87,817.90) scale(1.017,1)" font-family='"Liberation Sans","Noto Sans CJK SC",sans-serif' font-weight="normal" font-size="11.29" fill="#f2f2f2" >4.2</text>
<text transform="translate(809.05,818.09) scale(0.989,1)" font-family='"Liberation Sans","Noto Sans CJK SC",sans-serif' font-weight="normal" font-size="10.68" fill="#a9a9a9" >K/s</text>
<text transform="translate(792.76,838.69) scale(1.032,1)" font-family='"Liberation Sans","Noto Sans CJK SC",sans-serif' font-weight="normal" font-size="11.13" fill="#f2f2f2" >0.3</text>
<text transform="translate(809.05,838.99) scale(0.989,1)" font-family='"Liberation Sans","Noto Sans CJK SC",sans-serif' font-weight="normal" font-size="10.68" fill="#a9a9a9" >K/s</text>
</g>
<g id="netmon-green" shape-rendering="geometricPrecision">
<clipPath id="cpPill"><path d="M0,0 H1418 V855 H0 Z M1002.9,714.9 A29.8,29.8 0 1 0 1002.9,774.5 A29.8,29.8 0 1 0 1002.9,714.9 Z" clip-rule="evenodd"/></clipPath>
<path d="M1003,724 H1069.2 A21.9,21.9 0 0 1 1069.2,767.8 H1003 Z" fill="#1a2228" opacity="0.63" clip-path="url(#cpPill)"/>
<clipPath id="cpTop"><rect x="970" y="710" width="66" height="24.7"/></clipPath><clipPath id="cpBot"><rect x="970" y="734.7" width="66" height="45"/></clipPath>
<circle cx="1002.9" cy="744.7" r="29.8" fill="#1a2228" opacity="0.63" clip-path="url(#cpTop)"/>
<circle cx="1002.9" cy="744.7" r="29.8" fill="#24c42a" clip-path="url(#cpBot)"/>
<text transform="translate(984.35,754.73) scale(1.080,1)" font-family='"Liberation Sans","Noto Sans CJK SC",sans-serif' font-weight="normal" font-size="26.90" fill="#eefbea" stroke="#24c42a" stroke-width="0.5">64</text>
<text transform="translate(1017.51,753.89) scale(0.912,1)" font-family='"Liberation Sans","Noto Sans CJK SC",sans-serif' font-weight="normal" font-size="10.70" fill="#eefbea" >%</text>
<path d="M1037,735.8 L1040.1,732 L1043.2,735.8 H1041 V738.8 H1039.2 V735.8 Z" fill="#ff9c12"/>
<path d="M1037,755.3 L1040.1,759.2 L1043.2,755.3 H1041 V752.1 H1039.2 V755.3 Z" fill="#12a0ff"/>
<text transform="translate(1044.65,739.70) scale(1.056,1)" font-family='"Liberation Sans","Noto Sans CJK SC",sans-serif' font-weight="normal" font-size="10.14" fill="#f4f4f4" >16.9</text>
<text transform="translate(1067.00,740.40) scale(0.983,1)" font-family='"Liberation Sans","Noto Sans CJK SC",sans-serif' font-weight="normal" font-size="10.14" fill="#a0a0a0" >K/s</text>
<text transform="translate(1049.66,758.79) scale(1.073,1)" font-family='"Liberation Sans","Noto Sans CJK SC",sans-serif' font-weight="normal" font-size="10.56" fill="#f4f4f4" >0.8</text>
<text transform="translate(1067.00,759.20) scale(0.958,1)" font-family='"Liberation Sans","Noto Sans CJK SC",sans-serif' font-weight="normal" font-size="10.41" fill="#c4c4c4" >K/s</text>
</g>
</svg>
</body></html>
